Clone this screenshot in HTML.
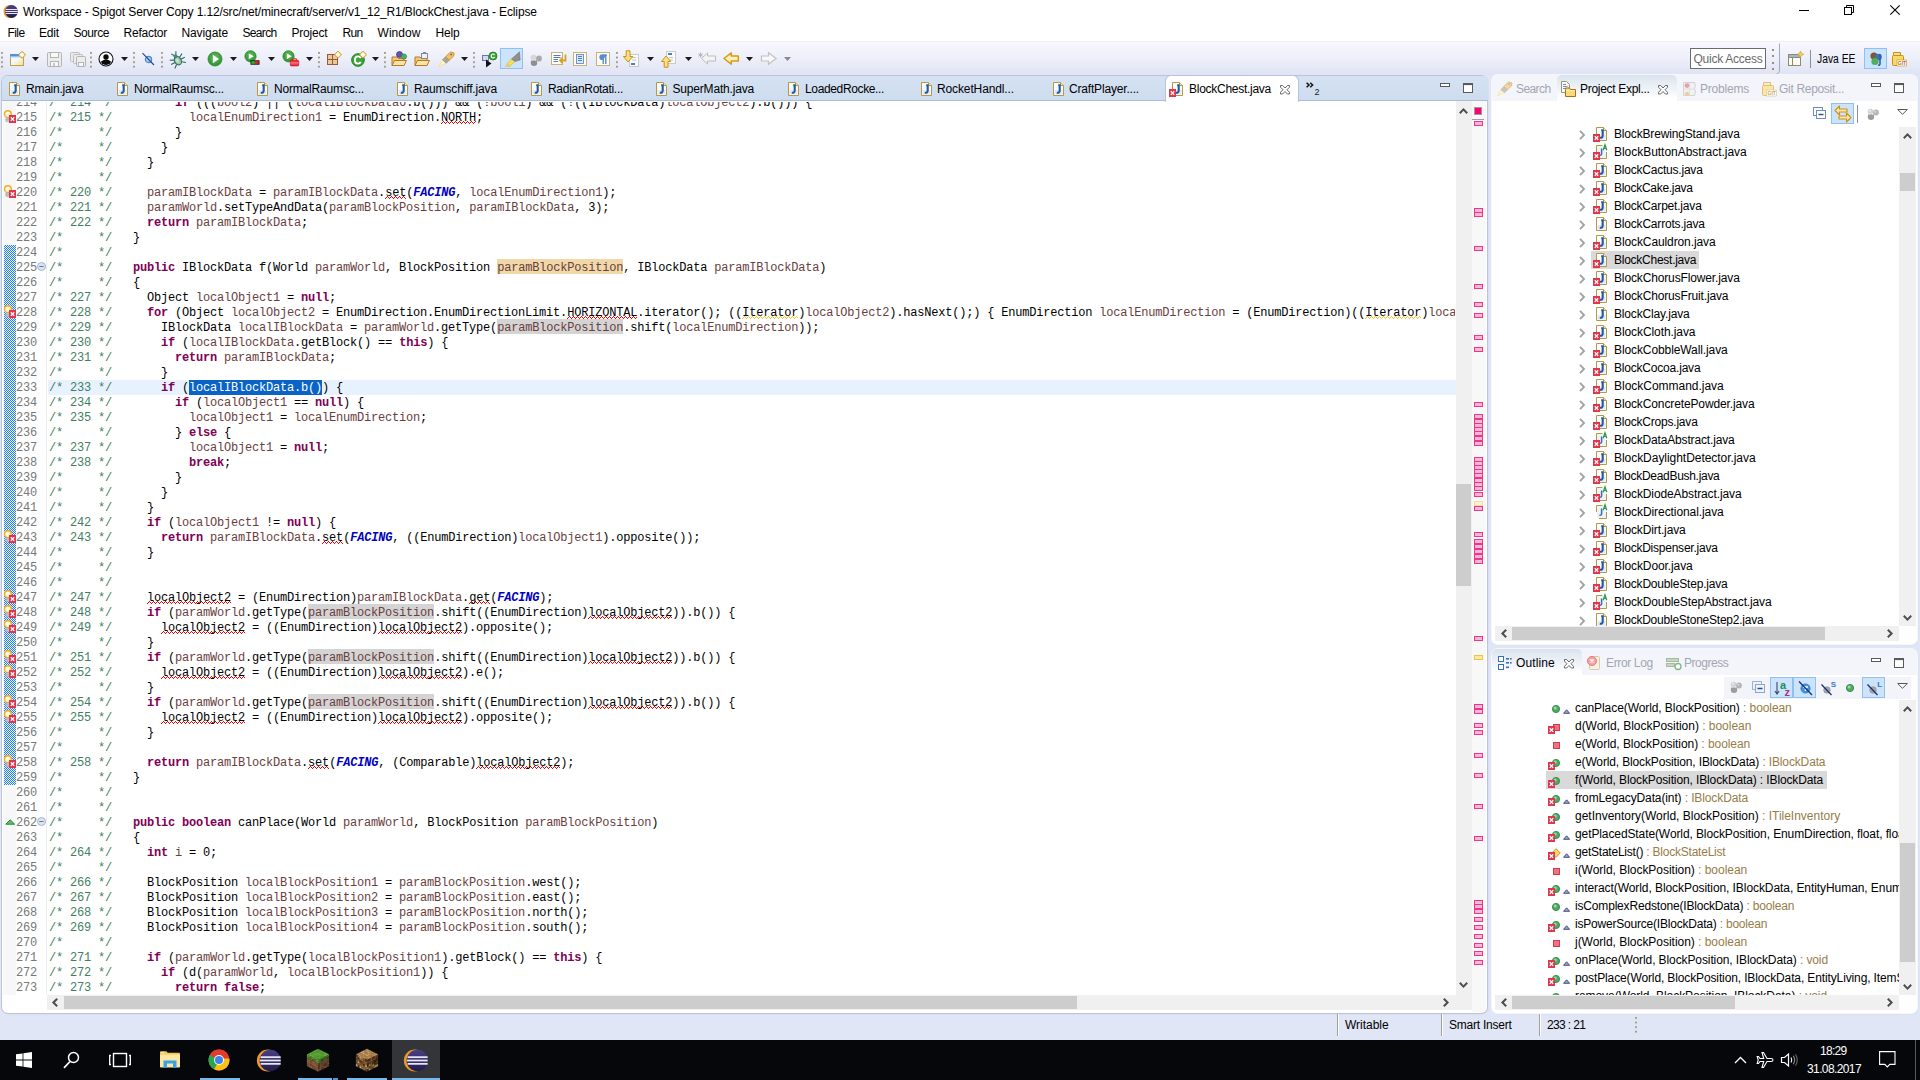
<!DOCTYPE html>
<html><head><meta charset="utf-8"><title>Eclipse</title>
<style>
*{box-sizing:border-box;margin:0;padding:0}
html,body{width:1920px;height:1080px;overflow:hidden}
body{position:relative;background:#e1e6f6;font-family:"Liberation Sans",sans-serif;font-size:12px;letter-spacing:-0.12px;color:#000;-webkit-font-smoothing:antialiased}
.abs{position:absolute}
.t{position:absolute;white-space:pre;line-height:16px;height:16px}
svg{position:absolute;overflow:visible}
/* title + menu */
#title{position:absolute;left:0;top:0;width:1920px;height:22px;background:#fff}
#menu{position:absolute;left:0;top:22px;width:1920px;height:19px;background:#fff}
#toolbar{position:absolute;left:0;top:41px;width:1920px;height:34px;border-top:1px solid #f0f0f0;background:linear-gradient(#f8f8fd 0%,#eef0fa 45%,#dfe3f3 100%)}
/* panels */
.panel{position:absolute;background:#fff;border-radius:6px;box-shadow:0 0 0 1px #bcc4da, 1px 1px 2px rgba(110,120,160,.18)}
.panel.inact{box-shadow:0 0 0 1px #f5f7fd, 1px 1px 2px rgba(130,140,180,.15)}
.tabbar{position:absolute;left:0;top:0;right:0;height:25px;background:linear-gradient(#d5e2f3,#cddcef);border-radius:5px 5px 0 0;border-bottom:1px solid #aebcd6}
.tabsel{position:absolute;top:0;height:26px;background:#fff;border-radius:5px 5px 0 0;box-shadow:0 0 0 1px #b6c3dc;clip-path:inset(-2px -2px 0 -2px)}
.gray{color:#a2a6b2}
/* code */
.code{font-family:"Liberation Mono",monospace;font-size:12px;letter-spacing:-0.2px;white-space:pre;line-height:15px}
.ln{position:absolute;left:0;height:15px;width:1455px}
.k{color:#7f0055;font-weight:bold}
.l{color:#6a3e3e}
.c{color:#3f7f5f}
.s{color:#0000c0;font-style:italic;font-weight:bold}
.n{color:#787878}
.o{padding-top:2px;background:linear-gradient(#d4d4d4,#d4d4d4) 0 0/100% 15px no-repeat}
.O{padding-top:2px;background:linear-gradient(#f0d8a8,#f0d8a8) 0 0/100% 15px no-repeat}
.sel{color:#fff}
.e{background:
 linear-gradient(90deg,transparent 2px,#f00 2px,#f00 3px,transparent 3px) 0 calc(100% - 3px)/4px 1px repeat-x,
 linear-gradient(90deg,transparent 1px,#f00 1px,#f00 2px,transparent 2px,transparent 3px,#f00 3px) 0 calc(100% - 2px)/4px 1px repeat-x,
 linear-gradient(90deg,#f00 1px,transparent 1px) 0 calc(100% - 1px)/4px 1px repeat-x}
.w{background:
 linear-gradient(90deg,transparent 2px,#f4c82d 2px,#f4c82d 3px,transparent 3px) 0 calc(100% - 3px)/4px 1px repeat-x,
 linear-gradient(90deg,transparent 1px,#f4c82d 1px,#f4c82d 2px,transparent 2px,transparent 3px,#f4c82d 3px) 0 calc(100% - 2px)/4px 1px repeat-x,
 linear-gradient(90deg,#f4c82d 1px,transparent 1px) 0 calc(100% - 1px)/4px 1px repeat-x}
/* scrollbars */
.sb{position:absolute;background:#f0f0f0}
.thumb{position:absolute;background:#cdcdcd}
.arr{position:absolute;color:#404040}
/* tree */
.row{position:absolute;height:18px;line-height:18px;white-space:pre}
.ret{color:#957d47}
/* taskbar */
#taskbar{position:absolute;left:0;top:1040px;width:1920px;height:40px;background:#05070b}

</style></head>
<body>
<div class="panel" id="editor" style="left:2px;top:76px;width:1485px;height:937px"></div>
<div class="abs" id="edarea" style="left:2px;top:101px;width:1485px;height:911px;overflow:hidden;background:#fff;border-radius:0 0 5px 5px">
<div class="abs" style="left:1px;top:0;width:13px;height:894px;background:#f7f7f7"></div>
<div class="abs" style="left:2px;top:144px;width:12px;height:540px;background:conic-gradient(#2b7fdc 25%,#e4effb 0 50%,#2b7fdc 0 75%,#e4effb 0) 0 0/2px 2px"></div>
<div class="abs" style="left:44px;top:0;width:1px;height:894px;background:#ededed"></div>
<div class="abs" style="left:46px;top:279px;width:1408px;height:15px;background:#e8f2fe"></div>
<div class="abs" style="left:187px;top:279px;width:133px;height:15px;background:#0a64c8"></div>
<div class="abs" style="left:0;top:0;width:1453px;height:894px;overflow:hidden"><div class="abs code" style="left:0;top:0;width:1453px;height:894px">
<div class="ln" style="top:-5px"><span class="abs n" style="left:14px">214</span><span class="abs" style="left:47px"><span class="c">/* 214 */</span>         <span class="k">if</span> (((<span class="l">bool2</span>) || (<span class="l">localIBlockData6</span>.b())) &amp;&amp; (!<span class="l">bool1</span>) &amp;&amp; (!((IBlockData)<span class="l">localObject2</span>).b())) {</span></div>
<div class="ln" style="top:10px"><span class="abs n" style="left:14px">215</span><span class="abs" style="left:47px"><span class="c">/* 215 */</span>           <span class="l">localEnumDirection1</span> = EnumDirection.<span class="e">NORTH</span>;</span></div>
<div class="ln" style="top:25px"><span class="abs n" style="left:14px">216</span><span class="abs" style="left:47px"><span class="c">/*     */</span>         }</span></div>
<div class="ln" style="top:40px"><span class="abs n" style="left:14px">217</span><span class="abs" style="left:47px"><span class="c">/*     */</span>       }</span></div>
<div class="ln" style="top:55px"><span class="abs n" style="left:14px">218</span><span class="abs" style="left:47px"><span class="c">/*     */</span>     }</span></div>
<div class="ln" style="top:70px"><span class="abs n" style="left:14px">219</span><span class="abs" style="left:47px"><span class="c">/*     */</span> </span></div>
<div class="ln" style="top:85px"><span class="abs n" style="left:14px">220</span><span class="abs" style="left:47px"><span class="c">/* 220 */</span>     <span class="l">paramIBlockData</span> = <span class="l">paramIBlockData</span>.<span class="e">set</span>(<span class="s">FACING</span>, <span class="l">localEnumDirection1</span>);</span></div>
<div class="ln" style="top:100px"><span class="abs n" style="left:14px">221</span><span class="abs" style="left:47px"><span class="c">/* 221 */</span>     <span class="l">paramWorld</span>.setTypeAndData(<span class="l">paramBlockPosition</span>, <span class="l">paramIBlockData</span>, 3);</span></div>
<div class="ln" style="top:115px"><span class="abs n" style="left:14px">222</span><span class="abs" style="left:47px"><span class="c">/* 222 */</span>     <span class="k">return</span> <span class="l">paramIBlockData</span>;</span></div>
<div class="ln" style="top:130px"><span class="abs n" style="left:14px">223</span><span class="abs" style="left:47px"><span class="c">/*     */</span>   }</span></div>
<div class="ln" style="top:145px"><span class="abs n" style="left:14px">224</span><span class="abs" style="left:47px"><span class="c">/*     */</span> </span></div>
<div class="ln" style="top:160px"><span class="abs n" style="left:14px">225</span><span class="abs" style="left:47px"><span class="c">/*     */</span>   <span class="k">public</span> IBlockData f(World <span class="l">paramWorld</span>, BlockPosition <span class="O l">paramBlockPosition</span>, IBlockData <span class="l">paramIBlockData</span>)</span></div>
<div class="ln" style="top:175px"><span class="abs n" style="left:14px">226</span><span class="abs" style="left:47px"><span class="c">/*     */</span>   {</span></div>
<div class="ln" style="top:190px"><span class="abs n" style="left:14px">227</span><span class="abs" style="left:47px"><span class="c">/* 227 */</span>     Object <span class="l">localObject1</span> = <span class="k">null</span>;</span></div>
<div class="ln" style="top:205px"><span class="abs n" style="left:14px">228</span><span class="abs" style="left:47px"><span class="c">/* 228 */</span>     <span class="k">for</span> (Object <span class="l">localObject2</span> = EnumDirection.EnumDirectionLimit.<span class="e">HORIZONTAL</span>.iterator(); ((<span class="w">Iterator</span>)<span class="l">localObject2</span>).hasNext();) { EnumDirection <span class="l">localEnumDirection</span> = (EnumDirection)((<span class="w">Iterator</span>)<span class="l">localObject2</span>).next();</span></div>
<div class="ln" style="top:220px"><span class="abs n" style="left:14px">229</span><span class="abs" style="left:47px"><span class="c">/* 229 */</span>       IBlockData <span class="l">localIBlockData</span> = <span class="l">paramWorld</span>.getType(<span class="o l">paramBlockPosition</span>.shift(<span class="l">localEnumDirection</span>));</span></div>
<div class="ln" style="top:235px"><span class="abs n" style="left:14px">230</span><span class="abs" style="left:47px"><span class="c">/* 230 */</span>       <span class="k">if</span> (<span class="l">localIBlockData</span>.getBlock() == <span class="k">this</span>) {</span></div>
<div class="ln" style="top:250px"><span class="abs n" style="left:14px">231</span><span class="abs" style="left:47px"><span class="c">/* 231 */</span>         <span class="k">return</span> <span class="l">paramIBlockData</span>;</span></div>
<div class="ln" style="top:265px"><span class="abs n" style="left:14px">232</span><span class="abs" style="left:47px"><span class="c">/*     */</span>       }</span></div>
<div class="ln" style="top:280px"><span class="abs n" style="left:14px">233</span><span class="abs" style="left:47px"><span class="c">/* 233 */</span>       <span class="k">if</span> (<span class="sel">localIBlockData.b()</span>) {</span></div>
<div class="ln" style="top:295px"><span class="abs n" style="left:14px">234</span><span class="abs" style="left:47px"><span class="c">/* 234 */</span>         <span class="k">if</span> (<span class="l">localObject1</span> == <span class="k">null</span>) {</span></div>
<div class="ln" style="top:310px"><span class="abs n" style="left:14px">235</span><span class="abs" style="left:47px"><span class="c">/* 235 */</span>           <span class="l">localObject1</span> = <span class="l">localEnumDirection</span>;</span></div>
<div class="ln" style="top:325px"><span class="abs n" style="left:14px">236</span><span class="abs" style="left:47px"><span class="c">/*     */</span>         } <span class="k">else</span> {</span></div>
<div class="ln" style="top:340px"><span class="abs n" style="left:14px">237</span><span class="abs" style="left:47px"><span class="c">/* 237 */</span>           <span class="l">localObject1</span> = <span class="k">null</span>;</span></div>
<div class="ln" style="top:355px"><span class="abs n" style="left:14px">238</span><span class="abs" style="left:47px"><span class="c">/* 238 */</span>           <span class="k">break</span>;</span></div>
<div class="ln" style="top:370px"><span class="abs n" style="left:14px">239</span><span class="abs" style="left:47px"><span class="c">/*     */</span>         }</span></div>
<div class="ln" style="top:385px"><span class="abs n" style="left:14px">240</span><span class="abs" style="left:47px"><span class="c">/*     */</span>       }</span></div>
<div class="ln" style="top:400px"><span class="abs n" style="left:14px">241</span><span class="abs" style="left:47px"><span class="c">/*     */</span>     }</span></div>
<div class="ln" style="top:415px"><span class="abs n" style="left:14px">242</span><span class="abs" style="left:47px"><span class="c">/* 242 */</span>     <span class="k">if</span> (<span class="l">localObject1</span> != <span class="k">null</span>) {</span></div>
<div class="ln" style="top:430px"><span class="abs n" style="left:14px">243</span><span class="abs" style="left:47px"><span class="c">/* 243 */</span>       <span class="k">return</span> <span class="l">paramIBlockData</span>.<span class="e">set</span>(<span class="s">FACING</span>, ((EnumDirection)<span class="l">localObject1</span>).opposite());</span></div>
<div class="ln" style="top:445px"><span class="abs n" style="left:14px">244</span><span class="abs" style="left:47px"><span class="c">/*     */</span>     }</span></div>
<div class="ln" style="top:460px"><span class="abs n" style="left:14px">245</span><span class="abs" style="left:47px"><span class="c">/*     */</span> </span></div>
<div class="ln" style="top:475px"><span class="abs n" style="left:14px">246</span><span class="abs" style="left:47px"><span class="c">/*     */</span> </span></div>
<div class="ln" style="top:490px"><span class="abs n" style="left:14px">247</span><span class="abs" style="left:47px"><span class="c">/* 247 */</span>     <span class="e">localObject2</span> = (EnumDirection)<span class="l">paramIBlockData</span>.<span class="e">get</span>(<span class="s">FACING</span>);</span></div>
<div class="ln" style="top:505px"><span class="abs n" style="left:14px">248</span><span class="abs" style="left:47px"><span class="c">/* 248 */</span>     <span class="k">if</span> (<span class="l">paramWorld</span>.getType(<span class="o l">paramBlockPosition</span>.shift((EnumDirection)<span class="e">localObject2</span>)).b()) {</span></div>
<div class="ln" style="top:520px"><span class="abs n" style="left:14px">249</span><span class="abs" style="left:47px"><span class="c">/* 249 */</span>       <span class="e">localObject2</span> = ((EnumDirection)<span class="e">localObject2</span>).opposite();</span></div>
<div class="ln" style="top:535px"><span class="abs n" style="left:14px">250</span><span class="abs" style="left:47px"><span class="c">/*     */</span>     }</span></div>
<div class="ln" style="top:550px"><span class="abs n" style="left:14px">251</span><span class="abs" style="left:47px"><span class="c">/* 251 */</span>     <span class="k">if</span> (<span class="l">paramWorld</span>.getType(<span class="o l">paramBlockPosition</span>.shift((EnumDirection)<span class="e">localObject2</span>)).b()) {</span></div>
<div class="ln" style="top:565px"><span class="abs n" style="left:14px">252</span><span class="abs" style="left:47px"><span class="c">/* 252 */</span>       <span class="e">localObject2</span> = ((EnumDirection)<span class="e">localObject2</span>).e();</span></div>
<div class="ln" style="top:580px"><span class="abs n" style="left:14px">253</span><span class="abs" style="left:47px"><span class="c">/*     */</span>     }</span></div>
<div class="ln" style="top:595px"><span class="abs n" style="left:14px">254</span><span class="abs" style="left:47px"><span class="c">/* 254 */</span>     <span class="k">if</span> (<span class="l">paramWorld</span>.getType(<span class="o l">paramBlockPosition</span>.shift((EnumDirection)<span class="e">localObject2</span>)).b()) {</span></div>
<div class="ln" style="top:610px"><span class="abs n" style="left:14px">255</span><span class="abs" style="left:47px"><span class="c">/* 255 */</span>       <span class="e">localObject2</span> = ((EnumDirection)<span class="e">localObject2</span>).opposite();</span></div>
<div class="ln" style="top:625px"><span class="abs n" style="left:14px">256</span><span class="abs" style="left:47px"><span class="c">/*     */</span>     }</span></div>
<div class="ln" style="top:640px"><span class="abs n" style="left:14px">257</span><span class="abs" style="left:47px"><span class="c">/*     */</span> </span></div>
<div class="ln" style="top:655px"><span class="abs n" style="left:14px">258</span><span class="abs" style="left:47px"><span class="c">/* 258 */</span>     <span class="k">return</span> <span class="l">paramIBlockData</span>.<span class="e">set</span>(<span class="s">FACING</span>, (Comparable)<span class="e">localObject2</span>);</span></div>
<div class="ln" style="top:670px"><span class="abs n" style="left:14px">259</span><span class="abs" style="left:47px"><span class="c">/*     */</span>   }</span></div>
<div class="ln" style="top:685px"><span class="abs n" style="left:14px">260</span><span class="abs" style="left:47px"><span class="c">/*     */</span> </span></div>
<div class="ln" style="top:700px"><span class="abs n" style="left:14px">261</span><span class="abs" style="left:47px"><span class="c">/*     */</span> </span></div>
<div class="ln" style="top:715px"><span class="abs n" style="left:14px">262</span><span class="abs" style="left:47px"><span class="c">/*     */</span>   <span class="k">public</span> <span class="k">boolean</span> canPlace(World <span class="l">paramWorld</span>, BlockPosition <span class="l">paramBlockPosition</span>)</span></div>
<div class="ln" style="top:730px"><span class="abs n" style="left:14px">263</span><span class="abs" style="left:47px"><span class="c">/*     */</span>   {</span></div>
<div class="ln" style="top:745px"><span class="abs n" style="left:14px">264</span><span class="abs" style="left:47px"><span class="c">/* 264 */</span>     <span class="k">int</span> <span class="l">i</span> = 0;</span></div>
<div class="ln" style="top:760px"><span class="abs n" style="left:14px">265</span><span class="abs" style="left:47px"><span class="c">/*     */</span> </span></div>
<div class="ln" style="top:775px"><span class="abs n" style="left:14px">266</span><span class="abs" style="left:47px"><span class="c">/* 266 */</span>     BlockPosition <span class="l">localBlockPosition1</span> = <span class="l">paramBlockPosition</span>.west();</span></div>
<div class="ln" style="top:790px"><span class="abs n" style="left:14px">267</span><span class="abs" style="left:47px"><span class="c">/* 267 */</span>     BlockPosition <span class="l">localBlockPosition2</span> = <span class="l">paramBlockPosition</span>.east();</span></div>
<div class="ln" style="top:805px"><span class="abs n" style="left:14px">268</span><span class="abs" style="left:47px"><span class="c">/* 268 */</span>     BlockPosition <span class="l">localBlockPosition3</span> = <span class="l">paramBlockPosition</span>.north();</span></div>
<div class="ln" style="top:820px"><span class="abs n" style="left:14px">269</span><span class="abs" style="left:47px"><span class="c">/* 269 */</span>     BlockPosition <span class="l">localBlockPosition4</span> = <span class="l">paramBlockPosition</span>.south();</span></div>
<div class="ln" style="top:835px"><span class="abs n" style="left:14px">270</span><span class="abs" style="left:47px"><span class="c">/*     */</span> </span></div>
<div class="ln" style="top:850px"><span class="abs n" style="left:14px">271</span><span class="abs" style="left:47px"><span class="c">/* 271 */</span>     <span class="k">if</span> (<span class="l">paramWorld</span>.getType(<span class="l">localBlockPosition1</span>).getBlock() == <span class="k">this</span>) {</span></div>
<div class="ln" style="top:865px"><span class="abs n" style="left:14px">272</span><span class="abs" style="left:47px"><span class="c">/* 272 */</span>       <span class="k">if</span> (d(<span class="l">paramWorld</span>, <span class="l">localBlockPosition1</span>)) {</span></div>
<div class="ln" style="top:880px"><span class="abs n" style="left:14px">273</span><span class="abs" style="left:47px"><span class="c">/* 273 */</span>         <span class="k">return</span> <span class="k">false</span>;</span></div>
</div></div>
<div class="abs" style="left:14px;top:0;width:1440px;height:1px;background:#fff"></div>
<svg style="left:2px;top:9px" width="13" height="14" viewBox="0 0 13 14"><circle cx="3.9" cy="4.2" r="3.4" fill="#fdf3c0" stroke="#efae2c" stroke-width="1.4"/><circle cx="3.6" cy="3.6" r="1.3" fill="#fffbe6"/><rect x="1.8" y="8" width="3.6" height="3.6" rx="0.8" fill="#cfd3da" stroke="#9aa1ad" stroke-width="0.6"/><path d="M1.8 9.8H5.4" stroke="#8a919d" stroke-width=".6"/><rect x="5" y="5" width="7" height="8" fill="#e0364c"/><path d="M6.8 7.3L10.2 10.9M10.2 7.3L6.8 10.9" stroke="#fff" stroke-width="1.3" fill="none"/></svg>
<svg style="left:2px;top:84px" width="13" height="14" viewBox="0 0 13 14"><circle cx="3.9" cy="4.2" r="3.4" fill="#fdf3c0" stroke="#efae2c" stroke-width="1.4"/><circle cx="3.6" cy="3.6" r="1.3" fill="#fffbe6"/><rect x="1.8" y="8" width="3.6" height="3.6" rx="0.8" fill="#cfd3da" stroke="#9aa1ad" stroke-width="0.6"/><path d="M1.8 9.8H5.4" stroke="#8a919d" stroke-width=".6"/><rect x="5" y="5" width="7" height="8" fill="#e0364c"/><path d="M6.8 7.3L10.2 10.9M10.2 7.3L6.8 10.9" stroke="#fff" stroke-width="1.3" fill="none"/></svg>
<svg style="left:2px;top:204px" width="13" height="14" viewBox="0 0 13 14"><circle cx="3.9" cy="4.2" r="3.4" fill="#fdf3c0" stroke="#efae2c" stroke-width="1.4"/><circle cx="3.6" cy="3.6" r="1.3" fill="#fffbe6"/><rect x="1.8" y="8" width="3.6" height="3.6" rx="0.8" fill="#cfd3da" stroke="#9aa1ad" stroke-width="0.6"/><path d="M1.8 9.8H5.4" stroke="#8a919d" stroke-width=".6"/><rect x="5" y="5" width="7" height="8" fill="#e0364c"/><path d="M6.8 7.3L10.2 10.9M10.2 7.3L6.8 10.9" stroke="#fff" stroke-width="1.3" fill="none"/></svg>
<svg style="left:2px;top:429px" width="13" height="14" viewBox="0 0 13 14"><circle cx="3.9" cy="4.2" r="3.4" fill="#fdf3c0" stroke="#efae2c" stroke-width="1.4"/><circle cx="3.6" cy="3.6" r="1.3" fill="#fffbe6"/><rect x="1.8" y="8" width="3.6" height="3.6" rx="0.8" fill="#cfd3da" stroke="#9aa1ad" stroke-width="0.6"/><path d="M1.8 9.8H5.4" stroke="#8a919d" stroke-width=".6"/><rect x="5" y="5" width="7" height="8" fill="#e0364c"/><path d="M6.8 7.3L10.2 10.9M10.2 7.3L6.8 10.9" stroke="#fff" stroke-width="1.3" fill="none"/></svg>
<svg style="left:2px;top:489px" width="13" height="14" viewBox="0 0 13 14"><circle cx="3.9" cy="4.2" r="3.4" fill="#fdf3c0" stroke="#efae2c" stroke-width="1.4"/><circle cx="3.6" cy="3.6" r="1.3" fill="#fffbe6"/><rect x="1.8" y="8" width="3.6" height="3.6" rx="0.8" fill="#cfd3da" stroke="#9aa1ad" stroke-width="0.6"/><path d="M1.8 9.8H5.4" stroke="#8a919d" stroke-width=".6"/><rect x="5" y="5" width="7" height="8" fill="#e0364c"/><path d="M6.8 7.3L10.2 10.9M10.2 7.3L6.8 10.9" stroke="#fff" stroke-width="1.3" fill="none"/></svg>
<svg style="left:2px;top:504px" width="13" height="14" viewBox="0 0 13 14"><circle cx="3.9" cy="4.2" r="3.4" fill="#fdf3c0" stroke="#efae2c" stroke-width="1.4"/><circle cx="3.6" cy="3.6" r="1.3" fill="#fffbe6"/><rect x="1.8" y="8" width="3.6" height="3.6" rx="0.8" fill="#cfd3da" stroke="#9aa1ad" stroke-width="0.6"/><path d="M1.8 9.8H5.4" stroke="#8a919d" stroke-width=".6"/><rect x="5" y="5" width="7" height="8" fill="#e0364c"/><path d="M6.8 7.3L10.2 10.9M10.2 7.3L6.8 10.9" stroke="#fff" stroke-width="1.3" fill="none"/></svg>
<svg style="left:2px;top:519px" width="13" height="14" viewBox="0 0 13 14"><circle cx="3.9" cy="4.2" r="3.4" fill="#fdf3c0" stroke="#efae2c" stroke-width="1.4"/><circle cx="3.6" cy="3.6" r="1.3" fill="#fffbe6"/><rect x="1.8" y="8" width="3.6" height="3.6" rx="0.8" fill="#cfd3da" stroke="#9aa1ad" stroke-width="0.6"/><path d="M1.8 9.8H5.4" stroke="#8a919d" stroke-width=".6"/><rect x="5" y="5" width="7" height="8" fill="#e0364c"/><path d="M6.8 7.3L10.2 10.9M10.2 7.3L6.8 10.9" stroke="#fff" stroke-width="1.3" fill="none"/></svg>
<svg style="left:2px;top:549px" width="13" height="14" viewBox="0 0 13 14"><circle cx="3.9" cy="4.2" r="3.4" fill="#fdf3c0" stroke="#efae2c" stroke-width="1.4"/><circle cx="3.6" cy="3.6" r="1.3" fill="#fffbe6"/><rect x="1.8" y="8" width="3.6" height="3.6" rx="0.8" fill="#cfd3da" stroke="#9aa1ad" stroke-width="0.6"/><path d="M1.8 9.8H5.4" stroke="#8a919d" stroke-width=".6"/><rect x="5" y="5" width="7" height="8" fill="#e0364c"/><path d="M6.8 7.3L10.2 10.9M10.2 7.3L6.8 10.9" stroke="#fff" stroke-width="1.3" fill="none"/></svg>
<svg style="left:2px;top:564px" width="13" height="14" viewBox="0 0 13 14"><circle cx="3.9" cy="4.2" r="3.4" fill="#fdf3c0" stroke="#efae2c" stroke-width="1.4"/><circle cx="3.6" cy="3.6" r="1.3" fill="#fffbe6"/><rect x="1.8" y="8" width="3.6" height="3.6" rx="0.8" fill="#cfd3da" stroke="#9aa1ad" stroke-width="0.6"/><path d="M1.8 9.8H5.4" stroke="#8a919d" stroke-width=".6"/><rect x="5" y="5" width="7" height="8" fill="#e0364c"/><path d="M6.8 7.3L10.2 10.9M10.2 7.3L6.8 10.9" stroke="#fff" stroke-width="1.3" fill="none"/></svg>
<svg style="left:2px;top:594px" width="13" height="14" viewBox="0 0 13 14"><circle cx="3.9" cy="4.2" r="3.4" fill="#fdf3c0" stroke="#efae2c" stroke-width="1.4"/><circle cx="3.6" cy="3.6" r="1.3" fill="#fffbe6"/><rect x="1.8" y="8" width="3.6" height="3.6" rx="0.8" fill="#cfd3da" stroke="#9aa1ad" stroke-width="0.6"/><path d="M1.8 9.8H5.4" stroke="#8a919d" stroke-width=".6"/><rect x="5" y="5" width="7" height="8" fill="#e0364c"/><path d="M6.8 7.3L10.2 10.9M10.2 7.3L6.8 10.9" stroke="#fff" stroke-width="1.3" fill="none"/></svg>
<svg style="left:2px;top:609px" width="13" height="14" viewBox="0 0 13 14"><circle cx="3.9" cy="4.2" r="3.4" fill="#fdf3c0" stroke="#efae2c" stroke-width="1.4"/><circle cx="3.6" cy="3.6" r="1.3" fill="#fffbe6"/><rect x="1.8" y="8" width="3.6" height="3.6" rx="0.8" fill="#cfd3da" stroke="#9aa1ad" stroke-width="0.6"/><path d="M1.8 9.8H5.4" stroke="#8a919d" stroke-width=".6"/><rect x="5" y="5" width="7" height="8" fill="#e0364c"/><path d="M6.8 7.3L10.2 10.9M10.2 7.3L6.8 10.9" stroke="#fff" stroke-width="1.3" fill="none"/></svg>
<svg style="left:2px;top:654px" width="13" height="14" viewBox="0 0 13 14"><circle cx="3.9" cy="4.2" r="3.4" fill="#fdf3c0" stroke="#efae2c" stroke-width="1.4"/><circle cx="3.6" cy="3.6" r="1.3" fill="#fffbe6"/><rect x="1.8" y="8" width="3.6" height="3.6" rx="0.8" fill="#cfd3da" stroke="#9aa1ad" stroke-width="0.6"/><path d="M1.8 9.8H5.4" stroke="#8a919d" stroke-width=".6"/><rect x="5" y="5" width="7" height="8" fill="#e0364c"/><path d="M6.8 7.3L10.2 10.9M10.2 7.3L6.8 10.9" stroke="#fff" stroke-width="1.3" fill="none"/></svg>
<svg style="left:35px;top:161px" width="9" height="9" viewBox="0 0 9 9"><circle cx="4.5" cy="4.5" r="4" fill="#dce5ef" stroke="#a3b6cf" stroke-width="1"/><path d="M2.3 4.5H6.7" stroke="#5f7da6" stroke-width="1.1"/></svg>
<svg style="left:35px;top:716px" width="9" height="9" viewBox="0 0 9 9"><circle cx="4.5" cy="4.5" r="4" fill="#dce5ef" stroke="#a3b6cf" stroke-width="1"/><path d="M2.3 4.5H6.7" stroke="#5f7da6" stroke-width="1.1"/></svg>
<svg style="left:3px;top:718px" width="11" height="6" viewBox="0 0 11 6"><path d="M0.8 5.2L5.2 0.8L9.6 5.2Z" fill="#5fbf68" stroke="#1f8a34" stroke-width="1"/></svg>
<div class="sb" style="left:1454px;top:0;width:16px;height:894px"></div>
<div class="thumb" style="left:1454px;top:383px;width:15px;height:102px"></div>
<svg style="left:1457px;top:7px" width="9" height="6" viewBox="0 0 9 6"><path d="M0.8 5.2L4.5 1.4L8.2 5.2" fill="none" stroke="#4d4d4d" stroke-width="2"/></svg>
<svg style="left:1457px;top:881px" width="9" height="6" viewBox="0 0 9 6"><path d="M0.8 0.8L4.5 4.6L8.2 0.8" fill="none" stroke="#4d4d4d" stroke-width="2"/></svg>
<div class="abs" style="left:1470px;top:0;width:14px;height:911px;background:#f8f8f8"></div>
<div class="abs" style="left:1472px;top:6px;width:8px;height:8px;background:#ff0078;border:1px solid #a09a9c"></div>
<div class="abs" style="left:1470px;top:18px;width:12px;height:1px;background:#9aa0b0"></div>
<div class="abs" style="left:1472px;top:20px;width:9px;height:5px;background:#f9b9d6;border:1px solid #f0358c"></div>
<div class="abs" style="left:1472px;top:107px;width:9px;height:5px;background:#f9b9d6;border:1px solid #f0358c"></div>
<div class="abs" style="left:1472px;top:111px;width:9px;height:5px;background:#f9b9d6;border:1px solid #f0358c"></div>
<div class="abs" style="left:1472px;top:145px;width:9px;height:5px;background:#f9b9d6;border:1px solid #f0358c"></div>
<div class="abs" style="left:1472px;top:183px;width:9px;height:5px;background:#f9b9d6;border:1px solid #f0358c"></div>
<div class="abs" style="left:1472px;top:201px;width:9px;height:5px;background:#f9b9d6;border:1px solid #f0358c"></div>
<div class="abs" style="left:1472px;top:212px;width:9px;height:5px;background:#f9b9d6;border:1px solid #f0358c"></div>
<div class="abs" style="left:1472px;top:234px;width:9px;height:5px;background:#f9b9d6;border:1px solid #f0358c"></div>
<div class="abs" style="left:1472px;top:246px;width:9px;height:5px;background:#f9b9d6;border:1px solid #f0358c"></div>
<div class="abs" style="left:1472px;top:301px;width:9px;height:5px;background:#f9b9d6;border:1px solid #f0358c"></div>
<div class="abs" style="left:1472px;top:313px;width:9px;height:5px;background:#f9b9d6;border:1px solid #f0358c"></div>
<div class="abs" style="left:1472px;top:318px;width:9px;height:5px;background:#f9b9d6;border:1px solid #f0358c"></div>
<div class="abs" style="left:1472px;top:322px;width:9px;height:5px;background:#f9b9d6;border:1px solid #f0358c"></div>
<div class="abs" style="left:1472px;top:326px;width:9px;height:5px;background:#f9b9d6;border:1px solid #f0358c"></div>
<div class="abs" style="left:1472px;top:330px;width:9px;height:5px;background:#f9b9d6;border:1px solid #f0358c"></div>
<div class="abs" style="left:1472px;top:335px;width:9px;height:5px;background:#f9b9d6;border:1px solid #f0358c"></div>
<div class="abs" style="left:1472px;top:340px;width:9px;height:5px;background:#f9b9d6;border:1px solid #f0358c"></div>
<div class="abs" style="left:1472px;top:356px;width:9px;height:5px;background:#f9b9d6;border:1px solid #f0358c"></div>
<div class="abs" style="left:1472px;top:360px;width:9px;height:5px;background:#f9b9d6;border:1px solid #f0358c"></div>
<div class="abs" style="left:1472px;top:364px;width:9px;height:5px;background:#f9b9d6;border:1px solid #f0358c"></div>
<div class="abs" style="left:1472px;top:368px;width:9px;height:5px;background:#f9b9d6;border:1px solid #f0358c"></div>
<div class="abs" style="left:1472px;top:372px;width:9px;height:5px;background:#f9b9d6;border:1px solid #f0358c"></div>
<div class="abs" style="left:1472px;top:377px;width:9px;height:5px;background:#f9b9d6;border:1px solid #f0358c"></div>
<div class="abs" style="left:1472px;top:381px;width:9px;height:5px;background:#f9b9d6;border:1px solid #f0358c"></div>
<div class="abs" style="left:1472px;top:385px;width:9px;height:5px;background:#f9b9d6;border:1px solid #f0358c"></div>
<div class="abs" style="left:1472px;top:391px;width:9px;height:5px;background:#f9b9d6;border:1px solid #f0358c"></div>
<div class="abs" style="left:1472px;top:405px;width:9px;height:5px;background:#f9b9d6;border:1px solid #f0358c"></div>
<div class="abs" style="left:1472px;top:431px;width:9px;height:5px;background:#f9b9d6;border:1px solid #f0358c"></div>
<div class="abs" style="left:1472px;top:438px;width:9px;height:5px;background:#f9b9d6;border:1px solid #f0358c"></div>
<div class="abs" style="left:1472px;top:443px;width:9px;height:5px;background:#f9b9d6;border:1px solid #f0358c"></div>
<div class="abs" style="left:1472px;top:448px;width:9px;height:5px;background:#f9b9d6;border:1px solid #f0358c"></div>
<div class="abs" style="left:1472px;top:453px;width:9px;height:5px;background:#f9b9d6;border:1px solid #f0358c"></div>
<div class="abs" style="left:1472px;top:458px;width:9px;height:5px;background:#f9b9d6;border:1px solid #f0358c"></div>
<div class="abs" style="left:1472px;top:535px;width:9px;height:5px;background:#f9b9d6;border:1px solid #f0358c"></div>
<div class="abs" style="left:1472px;top:603px;width:9px;height:5px;background:#f9b9d6;border:1px solid #f0358c"></div>
<div class="abs" style="left:1472px;top:608px;width:9px;height:5px;background:#f9b9d6;border:1px solid #f0358c"></div>
<div class="abs" style="left:1472px;top:622px;width:9px;height:5px;background:#f9b9d6;border:1px solid #f0358c"></div>
<div class="abs" style="left:1472px;top:629px;width:9px;height:5px;background:#f9b9d6;border:1px solid #f0358c"></div>
<div class="abs" style="left:1472px;top:652px;width:9px;height:5px;background:#f9b9d6;border:1px solid #f0358c"></div>
<div class="abs" style="left:1472px;top:672px;width:9px;height:5px;background:#f9b9d6;border:1px solid #f0358c"></div>
<div class="abs" style="left:1472px;top:703px;width:9px;height:5px;background:#f9b9d6;border:1px solid #f0358c"></div>
<div class="abs" style="left:1472px;top:735px;width:9px;height:5px;background:#f9b9d6;border:1px solid #f0358c"></div>
<div class="abs" style="left:1472px;top:799px;width:9px;height:5px;background:#f9b9d6;border:1px solid #f0358c"></div>
<div class="abs" style="left:1472px;top:803px;width:9px;height:5px;background:#f9b9d6;border:1px solid #f0358c"></div>
<div class="abs" style="left:1472px;top:808px;width:9px;height:5px;background:#f9b9d6;border:1px solid #f0358c"></div>
<div class="abs" style="left:1472px;top:816px;width:9px;height:5px;background:#f9b9d6;border:1px solid #f0358c"></div>
<div class="abs" style="left:1472px;top:824px;width:9px;height:5px;background:#f9b9d6;border:1px solid #f0358c"></div>
<div class="abs" style="left:1472px;top:833px;width:9px;height:5px;background:#f9b9d6;border:1px solid #f0358c"></div>
<div class="abs" style="left:1472px;top:842px;width:9px;height:5px;background:#f9b9d6;border:1px solid #f0358c"></div>
<div class="abs" style="left:1472px;top:850px;width:9px;height:5px;background:#f9b9d6;border:1px solid #f0358c"></div>
<div class="abs" style="left:1472px;top:859px;width:9px;height:5px;background:#f9b9d6;border:1px solid #f0358c"></div>
<div class="abs" style="left:1472px;top:400px;width:9px;height:5px;background:#fbe9a6;border:1px solid #f0c43c;opacity:0.45"></div>
<div class="abs" style="left:1472px;top:554px;width:9px;height:5px;background:#fbe9a6;border:1px solid #f0c43c;opacity:1"></div>
<div class="sb" style="left:45px;top:894px;width:1408px;height:15px"></div>
<div class="thumb" style="left:62px;top:895px;width:1013px;height:13px"></div>
<svg style="left:50px;top:897px" width="6" height="9" viewBox="0 0 6 9"><path d="M5.2 0.8L1.4 4.5L5.2 8.2" fill="none" stroke="#4d4d4d" stroke-width="2"/></svg>
<svg style="left:1441px;top:897px" width="6" height="9" viewBox="0 0 6 9"><path d="M0.8 0.8L4.6 4.5L0.8 8.2" fill="none" stroke="#4d4d4d" stroke-width="2"/></svg>
<div class="abs" style="left:1453px;top:894px;width:17px;height:15px;background:#f0f0f0"></div>
</div>
<div id="title"></div><div id="menu"></div><div id="toolbar"></div>
<svg style="left:3px;top:4px" width="15" height="15" viewBox="0 0 14.2 14"><defs><linearGradient id="eg" x1="0" y1="0" x2="0" y2="1"><stop offset="0" stop-color="#4a3f86"/><stop offset="1" stop-color="#231c4d"/></linearGradient></defs><circle cx="6.7" cy="7" r="6.2" fill="#f19a22"/><circle cx="8.1" cy="7" r="6.1" fill="url(#eg)"/><rect x="2.6" y="4.6" width="11.4" height="1" fill="#e8e6f4"/><rect x="2.2" y="6.5" width="11.8" height="1" fill="#e8e6f4"/><rect x="2.6" y="8.4" width="11.4" height="1" fill="#e8e6f4"/></svg>
<span class="t " style="left:23px;top:4px;letter-spacing:-0.135px">Workspace - Spigot Server Copy 1.12/src/net/minecraft/server/v1_12_R1/BlockChest.java - Eclipse</span>
<div class="abs" style="left:1799px;top:10px;width:10px;height:1px;background:#000"></div>
<svg style="left:1844px;top:5px" width="10" height="10" viewBox="0 0 10 10"><rect x="0.5" y="2.5" width="7" height="7" fill="none" stroke="#000"/><path d="M2.5 2.5V0.5H9.5V7.5H7.5" fill="none" stroke="#000"/></svg>
<svg style="left:1890px;top:5px" width="10" height="10" viewBox="0 0 10 10"><path d="M0.3 0.3L9.7 9.7M9.7 0.3L0.3 9.7" stroke="#000" stroke-width="1.1"/></svg>
<span class="t " style="left:7.5px;top:25px;letter-spacing:-0.584px;">File</span>
<span class="t " style="left:39px;top:25px;letter-spacing:-0.169px;">Edit</span>
<span class="t " style="left:73.5px;top:25px;letter-spacing:-0.42px;">Source</span>
<span class="t " style="left:123.5px;top:25px;letter-spacing:-0.231px;">Refactor</span>
<span class="t " style="left:181.5px;top:25px;letter-spacing:-0.108px;">Navigate</span>
<span class="t " style="left:242.5px;top:25px;letter-spacing:-0.67px;">Search</span>
<span class="t " style="left:291.5px;top:25px;letter-spacing:-0.193px;">Project</span>
<span class="t " style="left:342.5px;top:25px;letter-spacing:-0.671px;">Run</span>
<span class="t " style="left:377.5px;top:25px;letter-spacing:0.053px;">Window</span>
<span class="t " style="left:435.5px;top:25px;letter-spacing:-0.17px;">Help</span>
<svg style="left:1px;top:52px" width="3" height="16" viewBox="0 0 3 16"><rect x="0" y="0" width="2" height="2" fill="#a29c8c"/><rect x="0.5" y="1.5" width="2" height="1" fill="#e9e6dc" opacity=".6"/><rect x="0" y="4.6" width="2" height="2" fill="#a29c8c"/><rect x="0.5" y="6.1" width="2" height="1" fill="#e9e6dc" opacity=".6"/><rect x="0" y="9.2" width="2" height="2" fill="#a29c8c"/><rect x="0.5" y="10.7" width="2" height="1" fill="#e9e6dc" opacity=".6"/><rect x="0" y="13.8" width="2" height="2" fill="#a29c8c"/><rect x="0.5" y="15.3" width="2" height="1" fill="#e9e6dc" opacity=".6"/></svg>
<svg style="left:90px;top:52px" width="3" height="16" viewBox="0 0 3 16"><rect x="0" y="0" width="2" height="2" fill="#a29c8c"/><rect x="0.5" y="1.5" width="2" height="1" fill="#e9e6dc" opacity=".6"/><rect x="0" y="4.6" width="2" height="2" fill="#a29c8c"/><rect x="0.5" y="6.1" width="2" height="1" fill="#e9e6dc" opacity=".6"/><rect x="0" y="9.2" width="2" height="2" fill="#a29c8c"/><rect x="0.5" y="10.7" width="2" height="1" fill="#e9e6dc" opacity=".6"/><rect x="0" y="13.8" width="2" height="2" fill="#a29c8c"/><rect x="0.5" y="15.3" width="2" height="1" fill="#e9e6dc" opacity=".6"/></svg>
<svg style="left:133px;top:52px" width="3" height="16" viewBox="0 0 3 16"><rect x="0" y="0" width="2" height="2" fill="#a29c8c"/><rect x="0.5" y="1.5" width="2" height="1" fill="#e9e6dc" opacity=".6"/><rect x="0" y="4.6" width="2" height="2" fill="#a29c8c"/><rect x="0.5" y="6.1" width="2" height="1" fill="#e9e6dc" opacity=".6"/><rect x="0" y="9.2" width="2" height="2" fill="#a29c8c"/><rect x="0.5" y="10.7" width="2" height="1" fill="#e9e6dc" opacity=".6"/><rect x="0" y="13.8" width="2" height="2" fill="#a29c8c"/><rect x="0.5" y="15.3" width="2" height="1" fill="#e9e6dc" opacity=".6"/></svg>
<svg style="left:161px;top:52px" width="3" height="16" viewBox="0 0 3 16"><rect x="0" y="0" width="2" height="2" fill="#a29c8c"/><rect x="0.5" y="1.5" width="2" height="1" fill="#e9e6dc" opacity=".6"/><rect x="0" y="4.6" width="2" height="2" fill="#a29c8c"/><rect x="0.5" y="6.1" width="2" height="1" fill="#e9e6dc" opacity=".6"/><rect x="0" y="9.2" width="2" height="2" fill="#a29c8c"/><rect x="0.5" y="10.7" width="2" height="1" fill="#e9e6dc" opacity=".6"/><rect x="0" y="13.8" width="2" height="2" fill="#a29c8c"/><rect x="0.5" y="15.3" width="2" height="1" fill="#e9e6dc" opacity=".6"/></svg>
<svg style="left:318px;top:52px" width="3" height="16" viewBox="0 0 3 16"><rect x="0" y="0" width="2" height="2" fill="#a29c8c"/><rect x="0.5" y="1.5" width="2" height="1" fill="#e9e6dc" opacity=".6"/><rect x="0" y="4.6" width="2" height="2" fill="#a29c8c"/><rect x="0.5" y="6.1" width="2" height="1" fill="#e9e6dc" opacity=".6"/><rect x="0" y="9.2" width="2" height="2" fill="#a29c8c"/><rect x="0.5" y="10.7" width="2" height="1" fill="#e9e6dc" opacity=".6"/><rect x="0" y="13.8" width="2" height="2" fill="#a29c8c"/><rect x="0.5" y="15.3" width="2" height="1" fill="#e9e6dc" opacity=".6"/></svg>
<svg style="left:384px;top:52px" width="3" height="16" viewBox="0 0 3 16"><rect x="0" y="0" width="2" height="2" fill="#a29c8c"/><rect x="0.5" y="1.5" width="2" height="1" fill="#e9e6dc" opacity=".6"/><rect x="0" y="4.6" width="2" height="2" fill="#a29c8c"/><rect x="0.5" y="6.1" width="2" height="1" fill="#e9e6dc" opacity=".6"/><rect x="0" y="9.2" width="2" height="2" fill="#a29c8c"/><rect x="0.5" y="10.7" width="2" height="1" fill="#e9e6dc" opacity=".6"/><rect x="0" y="13.8" width="2" height="2" fill="#a29c8c"/><rect x="0.5" y="15.3" width="2" height="1" fill="#e9e6dc" opacity=".6"/></svg>
<svg style="left:473px;top:52px" width="3" height="16" viewBox="0 0 3 16"><rect x="0" y="0" width="2" height="2" fill="#a29c8c"/><rect x="0.5" y="1.5" width="2" height="1" fill="#e9e6dc" opacity=".6"/><rect x="0" y="4.6" width="2" height="2" fill="#a29c8c"/><rect x="0.5" y="6.1" width="2" height="1" fill="#e9e6dc" opacity=".6"/><rect x="0" y="9.2" width="2" height="2" fill="#a29c8c"/><rect x="0.5" y="10.7" width="2" height="1" fill="#e9e6dc" opacity=".6"/><rect x="0" y="13.8" width="2" height="2" fill="#a29c8c"/><rect x="0.5" y="15.3" width="2" height="1" fill="#e9e6dc" opacity=".6"/></svg>
<svg style="left:616px;top:52px" width="3" height="16" viewBox="0 0 3 16"><rect x="0" y="0" width="2" height="2" fill="#a29c8c"/><rect x="0.5" y="1.5" width="2" height="1" fill="#e9e6dc" opacity=".6"/><rect x="0" y="4.6" width="2" height="2" fill="#a29c8c"/><rect x="0.5" y="6.1" width="2" height="1" fill="#e9e6dc" opacity=".6"/><rect x="0" y="9.2" width="2" height="2" fill="#a29c8c"/><rect x="0.5" y="10.7" width="2" height="1" fill="#e9e6dc" opacity=".6"/><rect x="0" y="13.8" width="2" height="2" fill="#a29c8c"/><rect x="0.5" y="15.3" width="2" height="1" fill="#e9e6dc" opacity=".6"/></svg>
<svg style="left:1772px;top:49px" width="2" height="22" viewBox="0 0 2 22"><rect x="0" y="0" width="2" height="2" fill="#9a9080"/><rect x="0" y="6" width="2" height="2" fill="#9a9080"/><rect x="0" y="13" width="2" height="2" fill="#9a9080"/><rect x="0" y="19" width="2" height="2" fill="#9a9080"/></svg>
<svg style="left:1774px;top:43px" width="8" height="32" viewBox="0 0 8 32"><path d="M5.5 0.5V27Q5.5 31 1 31.5" fill="none" stroke="#a3a9bf" stroke-width="1"/></svg>
<svg style="left:10px;top:51px" width="16" height="16" viewBox="0 0 16 16"><defs><linearGradient id="nw" x1="0" y1="0" x2="1" y2="1"><stop offset=".45" stop-color="#f4f9ff"/><stop offset="1" stop-color="#f6df8a"/></linearGradient></defs><rect x="0.5" y="3.5" width="13" height="11" fill="url(#nw)" stroke="#c2a04a"/><rect x="0" y="3" width="14" height="2.6" fill="#4e93dc"/><rect x="0" y="5.6" width="14" height="0.8" fill="#a8cdf2"/><rect x="9.4" y="1.1999999999999997" width="5.2" height="5.2" rx="1.2" transform="rotate(45 12 3.8)" fill="#f6e2a0" stroke="#c49a32" stroke-width="0.9"/><path d="M10 3.8H14M12 1.7999999999999998V5.8" stroke="#fff" stroke-width="1.2"/></svg>
<svg style="left:32px;top:57px" width="7" height="4" viewBox="0 0 7 4"><path d="M0 0H7L3.5 4Z" fill="#1a1a1a"/></svg>
<svg style="left:47px;top:52px" width="15" height="15" viewBox="0 0 15 15"><rect x="0.5" y="0.5" width="14" height="14" rx="1" fill="#ececec" stroke="#b4b4b4"/><rect x="3.5" y="0.5" width="8" height="5" fill="#f8f8f8" stroke="#b4b4b4"/><rect x="3.5" y="9.5" width="8" height="5" fill="#f8f8f8" stroke="#b4b4b4"/><rect x="6" y="11" width="2" height="3" fill="#c8c8c8"/></svg>
<svg style="left:70px;top:52px" width="16" height="15" viewBox="0 0 16 15"><rect x="0.5" y="0.5" width="9" height="9" rx="1" fill="#ececec" stroke="#bdbdbd"/><rect x="3.5" y="2.5" width="9" height="9" rx="1" fill="#ececec" stroke="#bdbdbd"/><rect x="6.5" y="4.5" width="9" height="10" rx="1" fill="#ececec" stroke="#b4b4b4"/><rect x="8.5" y="10.5" width="5" height="4" fill="#f8f8f8" stroke="#b4b4b4"/></svg>
<svg style="left:98px;top:51px" width="16" height="16" viewBox="0 0 16 16"><defs><clipPath id="uc"><circle cx="8" cy="8" r="5.9"/></clipPath></defs><circle cx="8" cy="8" r="7" fill="#fff" stroke="#111" stroke-width="1.1"/><g clip-path="url(#uc)"><circle cx="8" cy="6" r="2.7" fill="#0a0a0a"/><ellipse cx="8" cy="14.2" rx="6.2" ry="5.6" fill="#0a0a0a"/></g></svg>
<svg style="left:121px;top:57px" width="7" height="4" viewBox="0 0 7 4"><path d="M0 0H7L3.5 4Z" fill="#1a1a1a"/></svg>
<svg style="left:141px;top:52px" width="14" height="14" viewBox="0 0 14 14"><circle cx="7.5" cy="7.5" r="3.1" fill="#a9cfee" stroke="#4a86c8" stroke-width="1.2"/><path d="M1.5 1.2L13 13" stroke="#2a3f8f" stroke-width="1.1"/></svg>
<svg style="left:169px;top:51px" width="17" height="17" viewBox="0 0 17 17"><g transform="rotate(-28 8.5 9)"><path d="M5.4 7.5L1.5 5.5M5.2 10H0.8M5.6 12.5L2.2 15.2M11.6 7.5L15.5 5.5M11.8 10H16.2M11.4 12.5L14.8 15.2M7.4 3.4L5.8 0.6M9.6 3.4L11.2 0.6" stroke="#2c6a68" stroke-width="1.1" fill="none"/><ellipse cx="8.5" cy="9.8" rx="3.3" ry="4.4" fill="#a3cba3" stroke="#2c6a68" stroke-width="1.1"/><circle cx="8.5" cy="4.8" r="1.7" fill="#4f8f80" stroke="#2c6a68" stroke-width=".6"/><ellipse cx="8" cy="9.4" rx="1.4" ry="2.4" fill="#d2e8cf" opacity=".8"/></g></svg>
<svg style="left:192px;top:57px" width="7" height="4" viewBox="0 0 7 4"><path d="M0 0H7L3.5 4Z" fill="#1a1a1a"/></svg>
<svg style="left:207px;top:51px" width="16" height="16" viewBox="0 0 16 16"><defs><radialGradient id="rg" cx=".5" cy=".4" r=".6"><stop offset="0" stop-color="#62c25e"/><stop offset="1" stop-color="#2f8f2e"/></radialGradient></defs><circle cx="8" cy="8" r="7" fill="url(#rg)" stroke="#2b8a2b" stroke-width="0.8"/><path d="M5.8 3.8L12 8L5.8 12.2Z" fill="#fff"/></svg>
<svg style="left:230px;top:57px" width="7" height="4" viewBox="0 0 7 4"><path d="M0 0H7L3.5 4Z" fill="#1a1a1a"/></svg>
<svg style="left:244px;top:50px" width="18" height="17" viewBox="0 0 18 17"><circle cx="6.5" cy="6.3" r="5.6" fill="url(#rg)" stroke="#2b8a2b" stroke-width="0.8"/><path d="M4.8 3.4L9.8 6.3L4.8 9.2Z" fill="#fff"/><rect x="6.5" y="10.3" width="9" height="4.4" fill="#111"/><rect x="7.3" y="11.1" width="3.6" height="2.8" fill="#1fb43a"/><rect x="10.9" y="11.1" width="3.8" height="2.8" fill="#e8202a"/></svg>
<svg style="left:268px;top:57px" width="7" height="4" viewBox="0 0 7 4"><path d="M0 0H7L3.5 4Z" fill="#1a1a1a"/></svg>
<svg style="left:282px;top:50px" width="18" height="17" viewBox="0 0 18 17"><circle cx="6.5" cy="6.3" r="5.6" fill="url(#rg)" stroke="#2b8a2b" stroke-width="0.8"/><path d="M4.8 3.4L9.8 6.3L4.8 9.2Z" fill="#fff"/><rect x="8.3" y="10.3" width="8.4" height="5.6" rx="1" fill="#ea2f38" stroke="#c4141e" stroke-width=".7"/><path d="M10.6 10.2V8.8H14.4V10.2" stroke="#d8202a" stroke-width="1" fill="none"/><path d="M8.6 12.4H16.4M8.6 13.8H16.4" stroke="#f7a0a4" stroke-width=".6" fill="none"/></svg>
<svg style="left:306px;top:57px" width="7" height="4" viewBox="0 0 7 4"><path d="M0 0H7L3.5 4Z" fill="#1a1a1a"/></svg>
<svg style="left:326px;top:51px" width="16" height="16" viewBox="0 0 16 16"><rect x="1.5" y="3.5" width="10" height="10" fill="#e9c9a0" stroke="#9a5a32"/><path d="M1.5 8.5H11.5M6.5 3.5V13.5" stroke="#9a5a32"/><rect x="9.4" y="1.0" width="5.2" height="5.2" rx="1.2" transform="rotate(45 12 3.6)" fill="#f6e2a0" stroke="#c49a32" stroke-width="0.9"/><path d="M10 3.6H14M12 1.6V5.6" stroke="#fff" stroke-width="1.2"/></svg>
<svg style="left:351px;top:51px" width="17" height="16" viewBox="0 0 17 16"><circle cx="7" cy="9" r="6.3" fill="#3ea53a" stroke="#1f7a23"/><path d="M9.8 7Q8.8 5.4 7 5.4Q3.9 5.4 3.9 9Q3.9 12.6 7 12.6Q8.8 12.6 9.8 11" fill="none" stroke="#fff" stroke-width="1.9"/><rect x="9.4" y="1.0" width="5.2" height="5.2" rx="1.2" transform="rotate(45 12 3.6)" fill="#f6e2a0" stroke="#c49a32" stroke-width="0.9"/><path d="M10 3.6H14M12 1.6V5.6" stroke="#fff" stroke-width="1.2"/></svg>
<svg style="left:372px;top:57px" width="7" height="4" viewBox="0 0 7 4"><path d="M0 0H7L3.5 4Z" fill="#1a1a1a"/></svg>
<svg style="left:391px;top:51px" width="17" height="16" viewBox="0 0 17 16"><path d="M1 6H6L7.5 7.5H13V14.5H1Z" fill="#f2c97a" stroke="#b27b26"/><path d="M1 14.5L3.5 9.5H15.5L13 14.5Z" fill="#fbe2a7" stroke="#b27b26"/><circle cx="8.5" cy="3.5" r="3" fill="#6a52a8" stroke="#3f2f7a" stroke-width=".7"/><circle cx="13" cy="5.5" r="2.6" fill="#4fae61" stroke="#2f8a45" stroke-width=".7"/></svg>
<svg style="left:414px;top:51px" width="17" height="16" viewBox="0 0 17 16"><path d="M1 6H6L7.5 7.5H13V14.5H1Z" fill="#f2c97a" stroke="#b27b26"/><path d="M1 14.5L3.5 9.5H15.5L13 14.5Z" fill="#fbe2a7" stroke="#b27b26"/><rect x="7.5" y="2.5" width="6" height="5" fill="#eef1f8" stroke="#8089a8"/><rect x="9" y="1" width="3" height="2" fill="#8089a8"/></svg>
<svg style="left:438px;top:51px" width="18" height="17" viewBox="0 0 18 17"><path d="M0.8 15.5L4.5 8.8L8.3 12.2Z" fill="#fdf6c8" stroke="#f0d868" stroke-width=".6"/><path d="M4.5 8.8L7.5 5.8L11.2 9.2L8.3 12.2Z" fill="#a8a6a4" stroke="#8a8884" stroke-width=".6"/><path d="M7.5 5.8L12.6 0.9L16.2 2L15.6 5.2L11.2 9.2Z" fill="#f5c062" stroke="#c8861e" stroke-width=".8"/><circle cx="13.2" cy="3.4" r="0.9" fill="#3f6fc0"/></svg>
<svg style="left:461px;top:57px" width="7" height="4" viewBox="0 0 7 4"><path d="M0 0H7L3.5 4Z" fill="#1a1a1a"/></svg>
<svg style="left:481px;top:51px" width="18" height="17" viewBox="0 0 18 17"><rect x="1.5" y="4.5" width="6" height="5" fill="#d6daf0" stroke="#6f76a8"/><path d="M5 8.5V16.5L10.5 12.5Z" fill="#111"/><circle cx="12" cy="5" r="4" fill="#3ea53a" stroke="#1f7a23" stroke-width=".8"/><path d="M13.6 4Q12.9 3 12 3Q10.2 3 10.2 5Q10.2 7 12 7Q12.9 7 13.6 6" fill="none" stroke="#fff" stroke-width="1.1"/></svg>
<div class="abs" style="left:500px;top:48px;width:23px;height:21px;background:#cce4fb;border:1px solid #8fc1f0"></div>
<svg style="left:504px;top:51px" width="17" height="16" viewBox="0 0 17 16"><path d="M1 15.3H6" stroke="#e9c93a" stroke-width="1.2"/><path d="M2.5 13.5L7.5 8L11 10.5L6.5 14.5Z" fill="#f7df57" stroke="#d7b52a" stroke-width=".6"/><path d="M7.5 8L15.5 0.8L16.2 9L11 10.5Z" fill="#8f8f8f" stroke="#6a6a6a" stroke-width=".5"/></svg>
<svg style="left:529px;top:54px" width="14" height="12" viewBox="0 0 14 12"><circle cx="4.5" cy="3.5" r="2.8" fill="#d6d6d6"/><circle cx="10" cy="4.5" r="2.9" fill="#a9a9a9"/><circle cx="5" cy="8.8" r="3.2" fill="#8f8f8f"/><path d="M3 6.4Q5 5 7 6.4" stroke="#fff" stroke-width=".9" fill="none"/></svg>
<svg style="left:550px;top:51px" width="17" height="16" viewBox="0 0 17 16"><rect x="1.5" y="1.5" width="11" height="12" fill="#fdfcf4" stroke="#c7b27a"/><path d="M3.5 4.5H10.5M3.5 6.5H10.5M3.5 8.5H8M3.5 10.5H8" stroke="#4f7fc0" stroke-width="1"/><path d="M15.5 3.5V9.5H10.5M12.5 7L10 9.5L12.5 12" fill="none" stroke="#d9a12a" stroke-width="1.8"/></svg>
<svg style="left:573px;top:52px" width="15" height="14" viewBox="0 0 15 14"><rect x="0.5" y="0.5" width="13" height="13" fill="#fdfcf4" stroke="#c7b27a"/><rect x="3.5" y="2.5" width="7" height="9" fill="#dfe8f8" stroke="#4f7fc0" stroke-width=".8"/><path d="M5 4.5H9M5 6.5H9M5 8.5H9" stroke="#4f7fc0" stroke-width="1"/></svg>
<svg style="left:596px;top:52px" width="15" height="14" viewBox="0 0 15 14"><rect x="0.5" y="0.5" width="13" height="13" fill="#fdfcf4" stroke="#c7b27a"/><path d="M9.8 3V12M7.2 3V12M10.8 3H6.5Q4 3 4 5.2Q4 7.4 7 7.4" fill="#5b8bd0" stroke="#5b8bd0" stroke-width="1.4"/></svg>
<svg style="left:623px;top:50px" width="17" height="18" viewBox="0 0 17 18"><rect x="6.5" y="4.5" width="9" height="12" fill="#fbfbf6" stroke="#c9cbd2"/><path d="M9 7.5H13M9 10H13" stroke="#b9c6de" stroke-width="1"/><path d="M8 14H12" stroke="#3f6fc0" stroke-width="1.8"/><path d="M3.2 0.8H7V6.5H9.8L5.1 12L0.4 6.5H3.2Z" fill="#fbe08a" stroke="#cf8f12" stroke-width="1" stroke-linejoin="round"/></svg>
<svg style="left:647px;top:57px" width="7" height="4" viewBox="0 0 7 4"><path d="M0 0H7L3.5 4Z" fill="#1a1a1a"/></svg>
<svg style="left:661px;top:50px" width="17" height="18" viewBox="0 0 17 18"><rect x="5.5" y="1.5" width="9" height="12" fill="#fbfbf6" stroke="#c9cbd2"/><path d="M8 7.5H12M8 10H12" stroke="#b9c6de" stroke-width="1"/><path d="M7 4H11" stroke="#3f6fc0" stroke-width="1.8"/><path d="M3.2 17.2H7V11.5H9.8L5.1 6L0.4 11.5H3.2Z" fill="#fbe08a" stroke="#cf8f12" stroke-width="1" stroke-linejoin="round"/></svg>
<svg style="left:685px;top:57px" width="7" height="4" viewBox="0 0 7 4"><path d="M0 0H7L3.5 4Z" fill="#1a1a1a"/></svg>
<svg style="left:698px;top:52px" width="18" height="13" viewBox="0 0 18 13"><path d="M17.5 4H9.5V1L3.5 6.5L9.5 12V9H17.5Z" fill="#f4f4f4" stroke="#bcbcbc"/><path d="M2.5 0.5V5.5M0.3 1.7L4.7 4.3M4.7 1.7L0.3 4.3" stroke="#b0b0b0" stroke-width=".9"/></svg>
<svg style="left:723px;top:52px" width="16" height="13" viewBox="0 0 16 13"><path d="M15.3 4H8.3V0.9L0.9 6.5L8.3 12.1V9H15.3Z" fill="#fdf0b8" stroke="#dc9a14" stroke-width="1.5" stroke-linejoin="round"/></svg>
<svg style="left:746px;top:57px" width="7" height="4" viewBox="0 0 7 4"><path d="M0 0H7L3.5 4Z" fill="#1a1a1a"/></svg>
<svg style="left:761px;top:52px" width="16" height="13" viewBox="0 0 16 13"><path d="M0.5 4H7.5V0.8L15.2 6.5L7.5 12.2V9H0.5Z" fill="#f8f8f8" stroke="#c2c2c2" stroke-width="1.2"/></svg>
<svg style="left:784px;top:57px" width="7" height="4" viewBox="0 0 7 4"><path d="M0 0H7L3.5 4Z" fill="#8a8a8a"/></svg>
<div class="abs" style="left:1690px;top:48px;width:76px;height:21px;background:#fff;border:1px solid #6b6b6b"></div>
<span class="t " style="left:1693.5px;top:51px;letter-spacing:-0.252px;color:#6a6a6a">Quick Access</span>
<svg style="left:1788px;top:51px" width="16" height="16" viewBox="0 0 16 16"><rect x="0.5" y="3.5" width="12" height="11" fill="#fdfcf4" stroke="#8f8a6a"/><path d="M0.5 6.5H12.5M4.5 6.5V14.5" stroke="#8f8a6a"/><rect x="1" y="4" width="11" height="2" fill="#9fb4d8"/><path d="M12.5 0L13.5 2.3L15.8 3.3L13.5 4.3L12.5 6.6L11.5 4.3L9.2 3.3L11.5 2.3Z" fill="#f7d354" stroke="#c69a22" stroke-width="0.6"/></svg>
<div class="abs" style="left:1810px;top:50px;width:1px;height:18px;background:#8a8fa0"></div>
<span class="t " style="left:1817px;top:51px;letter-spacing:0;transform:scaleX(0.86);transform-origin:0 50%">Java EE</span>
<div class="abs" style="left:1864px;top:48px;width:23px;height:21px;background:#cce4fb;border:1px solid #8fc1f0"></div>
<svg style="left:1868px;top:51px" width="16" height="16" viewBox="0 0 16 16"><circle cx="6" cy="5" r="3.6" fill="#7a5a3a"/><circle cx="10.5" cy="6" r="3.3" fill="#3f6fb8"/><circle cx="7" cy="10.5" r="3.6" fill="#4fae61"/><path d="M12 3V12.5Q12 14.5 10 14.3" stroke="#2c63a6" stroke-width="1.6" fill="none"/></svg>
<svg style="left:1891px;top:51px" width="16" height="16" viewBox="0 0 16 16"><path d="M2.5 4.5V1.5H9.5V4.5" fill="#f7df8f" stroke="#c6901a"/><rect x="1.5" y="4.5" width="11" height="10" rx="1" fill="#f7d96a" stroke="#c6901a"/><rect x="6" y="9" width="9.5" height="6" fill="#fff" stroke="#c6901a" stroke-width=".6"/><text x="6.8" y="14" font-family="Liberation Sans" font-size="5" font-weight="bold" fill="#b0701a" letter-spacing="0">GIT</text></svg>
<div class="abs" style="left:2px;top:76px;width:1486px;height:25px"><div class="tabbar"></div><div class="tabsel" style="left:1164px;width:132px"></div></div>
<svg style="left:6px;top:81px" width="16" height="16" viewBox="0 0 16 16"><path d="M3.5 1.5H10.5L13.5 4.5V14.5H3.5Z" fill="#fbfcff" stroke="#b8973f" stroke-width="1"/><path d="M10.5 1.5V4.5H13.5" fill="#f3e7c2" stroke="#b8973f" stroke-width="1"/><path d="M4.5 9H12.5V13.5H4.5Z" fill="#e1e9f7"/><path d="M8.2 4.3H10.6M9.7 4.2V9.6Q9.7 12.1 6.8 11.7" fill="none" stroke="#1f5a9e" stroke-width="2.1"/></svg>
<span class="t " style="left:26px;top:81px;letter-spacing:-0.252px;">Rmain.java</span>
<svg style="left:114px;top:81px" width="16" height="16" viewBox="0 0 16 16"><path d="M3.5 1.5H10.5L13.5 4.5V14.5H3.5Z" fill="#fbfcff" stroke="#b8973f" stroke-width="1"/><path d="M10.5 1.5V4.5H13.5" fill="#f3e7c2" stroke="#b8973f" stroke-width="1"/><path d="M4.5 9H12.5V13.5H4.5Z" fill="#e1e9f7"/><path d="M8.2 4.3H10.6M9.7 4.2V9.6Q9.7 12.1 6.8 11.7" fill="none" stroke="#1f5a9e" stroke-width="2.1"/></svg>
<span class="t " style="left:134px;top:81px;letter-spacing:-0.179px;">NormalRaumsc...</span>
<svg style="left:254px;top:81px" width="16" height="16" viewBox="0 0 16 16"><path d="M3.5 1.5H10.5L13.5 4.5V14.5H3.5Z" fill="#fbfcff" stroke="#b8973f" stroke-width="1"/><path d="M10.5 1.5V4.5H13.5" fill="#f3e7c2" stroke="#b8973f" stroke-width="1"/><path d="M4.5 9H12.5V13.5H4.5Z" fill="#e1e9f7"/><path d="M8.2 4.3H10.6M9.7 4.2V9.6Q9.7 12.1 6.8 11.7" fill="none" stroke="#1f5a9e" stroke-width="2.1"/></svg>
<span class="t " style="left:274px;top:81px;letter-spacing:-0.179px;">NormalRaumsc...</span>
<svg style="left:394px;top:81px" width="16" height="16" viewBox="0 0 16 16"><path d="M3.5 1.5H10.5L13.5 4.5V14.5H3.5Z" fill="#fbfcff" stroke="#b8973f" stroke-width="1"/><path d="M10.5 1.5V4.5H13.5" fill="#f3e7c2" stroke="#b8973f" stroke-width="1"/><path d="M4.5 9H12.5V13.5H4.5Z" fill="#e1e9f7"/><path d="M8.2 4.3H10.6M9.7 4.2V9.6Q9.7 12.1 6.8 11.7" fill="none" stroke="#1f5a9e" stroke-width="2.1"/></svg>
<span class="t " style="left:414px;top:81px;letter-spacing:-0.143px;">Raumschiff.java</span>
<svg style="left:528px;top:81px" width="16" height="16" viewBox="0 0 16 16"><path d="M3.5 1.5H10.5L13.5 4.5V14.5H3.5Z" fill="#fbfcff" stroke="#b8973f" stroke-width="1"/><path d="M10.5 1.5V4.5H13.5" fill="#f3e7c2" stroke="#b8973f" stroke-width="1"/><path d="M4.5 9H12.5V13.5H4.5Z" fill="#e1e9f7"/><path d="M8.2 4.3H10.6M9.7 4.2V9.6Q9.7 12.1 6.8 11.7" fill="none" stroke="#1f5a9e" stroke-width="2.1"/></svg>
<span class="t " style="left:548px;top:81px;letter-spacing:-0.292px;">RadianRotati...</span>
<svg style="left:653px;top:81px" width="16" height="16" viewBox="0 0 16 16"><path d="M3.5 1.5H10.5L13.5 4.5V14.5H3.5Z" fill="#fbfcff" stroke="#b8973f" stroke-width="1"/><path d="M10.5 1.5V4.5H13.5" fill="#f3e7c2" stroke="#b8973f" stroke-width="1"/><path d="M4.5 9H12.5V13.5H4.5Z" fill="#e1e9f7"/><path d="M8.2 4.3H10.6M9.7 4.2V9.6Q9.7 12.1 6.8 11.7" fill="none" stroke="#1f5a9e" stroke-width="2.1"/></svg>
<span class="t " style="left:672.5px;top:81px;letter-spacing:-0.182px;">SuperMath.java</span>
<svg style="left:785px;top:81px" width="16" height="16" viewBox="0 0 16 16"><path d="M3.5 1.5H10.5L13.5 4.5V14.5H3.5Z" fill="#fbfcff" stroke="#b8973f" stroke-width="1"/><path d="M10.5 1.5V4.5H13.5" fill="#f3e7c2" stroke="#b8973f" stroke-width="1"/><path d="M4.5 9H12.5V13.5H4.5Z" fill="#e1e9f7"/><path d="M8.2 4.3H10.6M9.7 4.2V9.6Q9.7 12.1 6.8 11.7" fill="none" stroke="#1f5a9e" stroke-width="2.1"/></svg>
<span class="t " style="left:805px;top:81px;letter-spacing:-0.361px;">LoadedRocke...</span>
<svg style="left:918px;top:81px" width="16" height="16" viewBox="0 0 16 16"><path d="M3.5 1.5H10.5L13.5 4.5V14.5H3.5Z" fill="#fbfcff" stroke="#b8973f" stroke-width="1"/><path d="M10.5 1.5V4.5H13.5" fill="#f3e7c2" stroke="#b8973f" stroke-width="1"/><path d="M4.5 9H12.5V13.5H4.5Z" fill="#e1e9f7"/><path d="M8.2 4.3H10.6M9.7 4.2V9.6Q9.7 12.1 6.8 11.7" fill="none" stroke="#1f5a9e" stroke-width="2.1"/></svg>
<span class="t " style="left:937px;top:81px;letter-spacing:-0.122px;">RocketHandl...</span>
<svg style="left:1050px;top:81px" width="16" height="16" viewBox="0 0 16 16"><path d="M3.5 1.5H10.5L13.5 4.5V14.5H3.5Z" fill="#fbfcff" stroke="#b8973f" stroke-width="1"/><path d="M10.5 1.5V4.5H13.5" fill="#f3e7c2" stroke="#b8973f" stroke-width="1"/><path d="M4.5 9H12.5V13.5H4.5Z" fill="#e1e9f7"/><path d="M8.2 4.3H10.6M9.7 4.2V9.6Q9.7 12.1 6.8 11.7" fill="none" stroke="#1f5a9e" stroke-width="2.1"/></svg>
<span class="t " style="left:1069px;top:81px;letter-spacing:-0.179px;">CraftPlayer....</span>
<svg style="left:1169px;top:81px" width="16" height="16" viewBox="0 0 16 16"><path d="M3.5 1.5H10.5L13.5 4.5V14.5H3.5Z" fill="#fbfcff" stroke="#b8973f" stroke-width="1"/><path d="M10.5 1.5V4.5H13.5" fill="#f3e7c2" stroke="#b8973f" stroke-width="1"/><path d="M4.5 9H12.5V13.5H4.5Z" fill="#e1e9f7"/><path d="M8.2 4.3H10.6M9.7 4.2V9.6Q9.7 12.1 6.8 11.7" fill="none" stroke="#1f5a9e" stroke-width="2.1"/><rect x="0" y="8" width="7" height="8" fill="#e0364c"/><path d="M1.8 10.3L5.2 13.9M5.2 10.3L1.8 13.9" stroke="#fff" stroke-width="1.3" fill="none"/></svg>
<span class="t " style="left:1189px;top:81px;letter-spacing:-0.269px;">BlockChest.java</span>
<svg style="left:1280px;top:85px" width="10" height="10" viewBox="0 0 10 10"><path d="M0.5 0.5H2.6L5 3L7.4 0.5H9.5V2.2L7 4.75L9.5 7.3V9H7.4L5 6.5L2.6 9H0.5V7.3L3 4.75L0.5 2.2Z" fill="#fff" stroke="#5a5a5a" stroke-width="0.9"/></svg>
<svg style="left:1306px;top:82px" width="14" height="14" viewBox="0 0 14 14"><path d="M0.6 0.8L3 3L0.6 5.2M4.2 0.8L6.6 3L4.2 5.2" fill="none" stroke="#111" stroke-width="1.5"/><text x="8.4" y="12.8" font-family="Liberation Sans" font-size="9" fill="#222" letter-spacing="0">2</text></svg>
<svg style="left:1440px;top:83px" width="11" height="5" viewBox="0 0 11 5"><rect x="0.5" y="0.5" width="9" height="3" fill="#fff" stroke="#5a5a5a"/></svg>
<svg style="left:1463px;top:83px" width="11" height="11" viewBox="0 0 11 11"><rect x="0.5" y="0.5" width="9" height="9" fill="#fff" stroke="#5a5a5a"/><rect x="0.5" y="0.5" width="9" height="1.6" fill="#5a5a5a"/></svg>
<div class="panel inact" style="left:1492px;top:75px;width:425px;height:569px"><div class="tabbar" style="background:#f3f5fb;border-bottom-color:#f3f5fb;height:26px"></div><div class="tabsel" style="left:65px;width:120px;box-shadow:none;background:linear-gradient(#d9e3ee,#fff 92%)"></div></div>
<svg style="left:1497px;top:81px" width="17" height="16" viewBox="0 0 17 16"><g opacity=".75"><path d="M0.8 14.5L4 8.4L7.6 11.6Z" fill="#fdf6c8" stroke="#f0d868" stroke-width=".6"/><path d="M4 8.4L6.8 5.6L10.4 8.8L7.6 11.6Z" fill="#b8b6b4" stroke="#9a9894" stroke-width=".6"/><path d="M6.8 5.6L11.6 1L15 2L14.4 5L10.4 8.8Z" fill="#f5cc82" stroke="#d09a3e" stroke-width=".8"/><circle cx="12.2" cy="3.3" r="0.8" fill="#6f8fc8"/></g></svg>
<span class="t gray" style="left:1516px;top:81px;letter-spacing:-0.587px;">Search</span>
<svg style="left:1560px;top:80px" width="18" height="17" viewBox="0 0 18 17"><path d="M1.5 1.5H6.5L9.5 4.5V12.5H1.5Z" fill="#fbfaf2" stroke="#9a9478"/><path d="M3 4.5H6M3 6.5H7.5M3 8.5H7.5" stroke="#5b86c8" stroke-width=".9"/><path d="M5.5 9.5V8H9.5L10.5 9.5H15.5V16.5H5.5Z" fill="#f9d978" stroke="#a9701c" stroke-width="1" stroke-linejoin="round"/><path d="M6.3 10.6H14.7" stroke="#fdf0c0" stroke-width="1"/></svg>
<span class="t " style="left:1580px;top:81px;letter-spacing:-0.302px;">Project Expl...</span>
<svg style="left:1658px;top:85px" width="10" height="10" viewBox="0 0 10 10"><path d="M0.5 0.5H2.6L5 3L7.4 0.5H9.5V2.2L7 4.75L9.5 7.3V9H7.4L5 6.5L2.6 9H0.5V7.3L3 4.75L0.5 2.2Z" fill="#fff" stroke="#5a5a5a" stroke-width="0.9"/></svg>
<svg style="left:1682px;top:81px" width="16" height="16" viewBox="0 0 16 16"><g opacity=".8"><path d="M1.5 1.5H12.5Q14.5 4 12.5 7.5Q14.5 11 12.5 14.5H1.5Z" fill="#f4f1ea" stroke="#c8cad8"/><path d="M1.5 8H12.8M7.5 1.5V14.5" stroke="#d2d6e4" stroke-width=".8"/><circle cx="5" cy="4.6" r="2.4" fill="#e88a94"/><path d="M3 14.5V12Q5 9.5 7 12V14.5Z" fill="#f4c47a"/></g></svg>
<span class="t gray" style="left:1700px;top:81px;letter-spacing:-0.21px;">Problems</span>
<svg style="left:1761px;top:81px" width="17" height="16" viewBox="0 0 17 16"><path d="M2.5 4.5V1.5H9.5V4.5" fill="#fbecc0" stroke="#dcbf7a"/><rect x="1.5" y="4.5" width="11" height="10" rx="1" fill="#fae6a8" stroke="#dcbf7a"/><rect x="5.5" y="9" width="10" height="6" fill="#fff" stroke="#dcbf7a" stroke-width=".6"/><text x="6.5" y="14" font-family="Liberation Sans" font-size="5" font-weight="bold" fill="#c9a468" letter-spacing="0">GIT</text></svg>
<span class="t gray" style="left:1779px;top:81px;letter-spacing:-0.311px;">Git Reposit...</span>
<svg style="left:1871px;top:83px" width="11" height="5" viewBox="0 0 11 5"><rect x="0.5" y="0.5" width="9" height="3" fill="#fff" stroke="#5a5a5a"/></svg>
<svg style="left:1894px;top:83px" width="11" height="11" viewBox="0 0 11 11"><rect x="0.5" y="0.5" width="9" height="9" fill="#fff" stroke="#5a5a5a"/><rect x="0.5" y="0.5" width="9" height="1.6" fill="#5a5a5a"/></svg>
<svg style="left:1813px;top:107px" width="14" height="13" viewBox="0 0 14 13"><rect x="0.5" y="0.5" width="9" height="8" fill="#fff" stroke="#6f8fc4"/><rect x="3.5" y="3.5" width="9" height="8" fill="#fff" stroke="#6f8fc4"/><path d="M5.5 7.5H10.5" stroke="#2b4f8f" stroke-width="1.4"/></svg>
<div class="abs" style="left:1831px;top:103px;width:23px;height:21px;background:#cce4fb;border:1px solid #8fc1f0"></div>
<svg style="left:1834px;top:105px" width="18" height="18" viewBox="0 0 18 18"><path d="M1 5.5L5.5 1V4H13V7H5.5V10Z" fill="#fbe9a8" stroke="#d28f14" stroke-width="1.1" stroke-linejoin="round"/><path d="M17 12.5L12.5 8V11H5V14H12.5V17Z" fill="#fbe9a8" stroke="#d28f14" stroke-width="1.1" stroke-linejoin="round"/></svg>
<div class="abs" style="left:1857px;top:105px;width:1px;height:18px;background:#8a8fa0"></div>
<svg style="left:1866px;top:108px" width="14" height="12" viewBox="0 0 14 12"><circle cx="4.5" cy="3.5" r="2.8" fill="#d2d2d2"/><circle cx="10" cy="4.5" r="2.9" fill="#b4b4b4"/><circle cx="5" cy="8.8" r="3.2" fill="#9c9c9c"/><path d="M3 6.4Q5 5 7 6.4" stroke="#fff" stroke-width=".9" fill="none"/><circle cx="3.8" cy="2.8" r="1" fill="#eee"/><circle cx="9.3" cy="3.7" r="1" fill="#ddd"/></svg>
<svg style="left:1897px;top:109px" width="11" height="6" viewBox="0 0 11 6"><path d="M0.7 0.5H10.3L5.5 5.3Z" fill="#fff" stroke="#555" stroke-width="1"/></svg>
<svg style="left:1579px;top:130px" width="7" height="10" viewBox="0 0 7 10"><path d="M1 0.8L5 5L1 9.2" fill="none" stroke="#a3a3a3" stroke-width="1.9"/></svg>
<svg style="left:1593px;top:126px" width="16" height="16" viewBox="0 0 16 16"><path d="M3.5 1.5H10.5L13.5 4.5V14.5H3.5Z" fill="#fbfcff" stroke="#b8973f" stroke-width="1"/><path d="M10.5 1.5V4.5H13.5" fill="#f3e7c2" stroke="#b8973f" stroke-width="1"/><path d="M4.5 9H12.5V13.5H4.5Z" fill="#e1e9f7"/><path d="M8.2 4.3H10.6M9.7 4.2V9.6Q9.7 12.1 6.8 11.7" fill="none" stroke="#1f5a9e" stroke-width="2.1"/><rect x="0" y="8" width="7" height="8" fill="#e0364c"/><path d="M1.8 10.3L5.2 13.9M5.2 10.3L1.8 13.9" stroke="#fff" stroke-width="1.3" fill="none"/></svg>
<span class="row" style="left:1614px;top:125px;letter-spacing:-0.168px">BlockBrewingStand.java</span>
<svg style="left:1579px;top:148px" width="7" height="10" viewBox="0 0 7 10"><path d="M1 0.8L5 5L1 9.2" fill="none" stroke="#a3a3a3" stroke-width="1.9"/></svg>
<svg style="left:1593px;top:144px" width="16" height="16" viewBox="0 0 16 16"><path d="M3.5 1.5H9.5M3.5 1.5V8M13.5 8V14.5H6" fill="none" stroke="#b8973f" stroke-width="1"/><rect x="4" y="2" width="9" height="12" fill="#eef2fb"/><path d="M8.6 4.5V9.6Q8.6 11.6 6.4 11.3" fill="none" stroke="#3b6ea8" stroke-width="1.5"/><path d="M10.2 6.3L12 0.8L13.8 6.3M10.9 4.4H13.1" fill="none" stroke="#2f9a4a" stroke-width="1.2"/><rect x="0" y="8" width="7" height="8" fill="#e0364c"/><path d="M1.8 10.3L5.2 13.9M5.2 10.3L1.8 13.9" stroke="#fff" stroke-width="1.3" fill="none"/></svg>
<span class="row" style="left:1614px;top:143px;letter-spacing:-0.029px">BlockButtonAbstract.java</span>
<svg style="left:1579px;top:166px" width="7" height="10" viewBox="0 0 7 10"><path d="M1 0.8L5 5L1 9.2" fill="none" stroke="#a3a3a3" stroke-width="1.9"/></svg>
<svg style="left:1593px;top:162px" width="16" height="16" viewBox="0 0 16 16"><path d="M3.5 1.5H10.5L13.5 4.5V14.5H3.5Z" fill="#fbfcff" stroke="#b8973f" stroke-width="1"/><path d="M10.5 1.5V4.5H13.5" fill="#f3e7c2" stroke="#b8973f" stroke-width="1"/><path d="M4.5 9H12.5V13.5H4.5Z" fill="#e1e9f7"/><path d="M8.2 4.3H10.6M9.7 4.2V9.6Q9.7 12.1 6.8 11.7" fill="none" stroke="#1f5a9e" stroke-width="2.1"/><rect x="0" y="8" width="7" height="8" fill="#e0364c"/><path d="M1.8 10.3L5.2 13.9M5.2 10.3L1.8 13.9" stroke="#fff" stroke-width="1.3" fill="none"/></svg>
<span class="row" style="left:1614px;top:161px;letter-spacing:-0.215px">BlockCactus.java</span>
<svg style="left:1579px;top:184px" width="7" height="10" viewBox="0 0 7 10"><path d="M1 0.8L5 5L1 9.2" fill="none" stroke="#a3a3a3" stroke-width="1.9"/></svg>
<svg style="left:1593px;top:180px" width="16" height="16" viewBox="0 0 16 16"><path d="M3.5 1.5H10.5L13.5 4.5V14.5H3.5Z" fill="#fbfcff" stroke="#b8973f" stroke-width="1"/><path d="M10.5 1.5V4.5H13.5" fill="#f3e7c2" stroke="#b8973f" stroke-width="1"/><path d="M4.5 9H12.5V13.5H4.5Z" fill="#e1e9f7"/><path d="M8.2 4.3H10.6M9.7 4.2V9.6Q9.7 12.1 6.8 11.7" fill="none" stroke="#1f5a9e" stroke-width="2.1"/><rect x="0" y="8" width="7" height="8" fill="#e0364c"/><path d="M1.8 10.3L5.2 13.9M5.2 10.3L1.8 13.9" stroke="#fff" stroke-width="1.3" fill="none"/></svg>
<span class="row" style="left:1614px;top:179px;letter-spacing:-0.286px">BlockCake.java</span>
<svg style="left:1579px;top:202px" width="7" height="10" viewBox="0 0 7 10"><path d="M1 0.8L5 5L1 9.2" fill="none" stroke="#a3a3a3" stroke-width="1.9"/></svg>
<svg style="left:1593px;top:198px" width="16" height="16" viewBox="0 0 16 16"><path d="M3.5 1.5H10.5L13.5 4.5V14.5H3.5Z" fill="#fbfcff" stroke="#b8973f" stroke-width="1"/><path d="M10.5 1.5V4.5H13.5" fill="#f3e7c2" stroke="#b8973f" stroke-width="1"/><path d="M4.5 9H12.5V13.5H4.5Z" fill="#e1e9f7"/><path d="M8.2 4.3H10.6M9.7 4.2V9.6Q9.7 12.1 6.8 11.7" fill="none" stroke="#1f5a9e" stroke-width="2.1"/><rect x="0" y="8" width="7" height="8" fill="#e0364c"/><path d="M1.8 10.3L5.2 13.9M5.2 10.3L1.8 13.9" stroke="#fff" stroke-width="1.3" fill="none"/></svg>
<span class="row" style="left:1614px;top:197px;letter-spacing:-0.194px">BlockCarpet.java</span>
<svg style="left:1579px;top:220px" width="7" height="10" viewBox="0 0 7 10"><path d="M1 0.8L5 5L1 9.2" fill="none" stroke="#a3a3a3" stroke-width="1.9"/></svg>
<svg style="left:1593px;top:216px" width="16" height="16" viewBox="0 0 16 16"><path d="M3.5 1.5H10.5L13.5 4.5V14.5H3.5Z" fill="#fbfcff" stroke="#b8973f" stroke-width="1"/><path d="M10.5 1.5V4.5H13.5" fill="#f3e7c2" stroke="#b8973f" stroke-width="1"/><path d="M4.5 9H12.5V13.5H4.5Z" fill="#e1e9f7"/><path d="M8.2 4.3H10.6M9.7 4.2V9.6Q9.7 12.1 6.8 11.7" fill="none" stroke="#1f5a9e" stroke-width="2.1"/></svg>
<span class="row" style="left:1614px;top:215px;letter-spacing:-0.19px">BlockCarrots.java</span>
<svg style="left:1579px;top:238px" width="7" height="10" viewBox="0 0 7 10"><path d="M1 0.8L5 5L1 9.2" fill="none" stroke="#a3a3a3" stroke-width="1.9"/></svg>
<svg style="left:1593px;top:234px" width="16" height="16" viewBox="0 0 16 16"><path d="M3.5 1.5H10.5L13.5 4.5V14.5H3.5Z" fill="#fbfcff" stroke="#b8973f" stroke-width="1"/><path d="M10.5 1.5V4.5H13.5" fill="#f3e7c2" stroke="#b8973f" stroke-width="1"/><path d="M4.5 9H12.5V13.5H4.5Z" fill="#e1e9f7"/><path d="M8.2 4.3H10.6M9.7 4.2V9.6Q9.7 12.1 6.8 11.7" fill="none" stroke="#1f5a9e" stroke-width="2.1"/><rect x="0" y="8" width="7" height="8" fill="#e0364c"/><path d="M1.8 10.3L5.2 13.9M5.2 10.3L1.8 13.9" stroke="#fff" stroke-width="1.3" fill="none"/></svg>
<span class="row" style="left:1614px;top:233px;letter-spacing:-0.105px">BlockCauldron.java</span>
<div class="abs" style="left:1591px;top:251px;width:108px;height:18px;background:#d9d9d9"></div>
<svg style="left:1579px;top:256px" width="7" height="10" viewBox="0 0 7 10"><path d="M1 0.8L5 5L1 9.2" fill="none" stroke="#a3a3a3" stroke-width="1.9"/></svg>
<svg style="left:1593px;top:252px" width="16" height="16" viewBox="0 0 16 16"><path d="M3.5 1.5H10.5L13.5 4.5V14.5H3.5Z" fill="#fbfcff" stroke="#b8973f" stroke-width="1"/><path d="M10.5 1.5V4.5H13.5" fill="#f3e7c2" stroke="#b8973f" stroke-width="1"/><path d="M4.5 9H12.5V13.5H4.5Z" fill="#e1e9f7"/><path d="M8.2 4.3H10.6M9.7 4.2V9.6Q9.7 12.1 6.8 11.7" fill="none" stroke="#1f5a9e" stroke-width="2.1"/><rect x="0" y="8" width="7" height="8" fill="#e0364c"/><path d="M1.8 10.3L5.2 13.9M5.2 10.3L1.8 13.9" stroke="#fff" stroke-width="1.3" fill="none"/></svg>
<span class="row" style="left:1614px;top:251px;letter-spacing:-0.256px">BlockChest.java</span>
<svg style="left:1579px;top:274px" width="7" height="10" viewBox="0 0 7 10"><path d="M1 0.8L5 5L1 9.2" fill="none" stroke="#a3a3a3" stroke-width="1.9"/></svg>
<svg style="left:1593px;top:270px" width="16" height="16" viewBox="0 0 16 16"><path d="M3.5 1.5H10.5L13.5 4.5V14.5H3.5Z" fill="#fbfcff" stroke="#b8973f" stroke-width="1"/><path d="M10.5 1.5V4.5H13.5" fill="#f3e7c2" stroke="#b8973f" stroke-width="1"/><path d="M4.5 9H12.5V13.5H4.5Z" fill="#e1e9f7"/><path d="M8.2 4.3H10.6M9.7 4.2V9.6Q9.7 12.1 6.8 11.7" fill="none" stroke="#1f5a9e" stroke-width="2.1"/><rect x="0" y="8" width="7" height="8" fill="#e0364c"/><path d="M1.8 10.3L5.2 13.9M5.2 10.3L1.8 13.9" stroke="#fff" stroke-width="1.3" fill="none"/></svg>
<span class="row" style="left:1614px;top:269px;letter-spacing:-0.137px">BlockChorusFlower.java</span>
<svg style="left:1579px;top:292px" width="7" height="10" viewBox="0 0 7 10"><path d="M1 0.8L5 5L1 9.2" fill="none" stroke="#a3a3a3" stroke-width="1.9"/></svg>
<svg style="left:1593px;top:288px" width="16" height="16" viewBox="0 0 16 16"><path d="M3.5 1.5H10.5L13.5 4.5V14.5H3.5Z" fill="#fbfcff" stroke="#b8973f" stroke-width="1"/><path d="M10.5 1.5V4.5H13.5" fill="#f3e7c2" stroke="#b8973f" stroke-width="1"/><path d="M4.5 9H12.5V13.5H4.5Z" fill="#e1e9f7"/><path d="M8.2 4.3H10.6M9.7 4.2V9.6Q9.7 12.1 6.8 11.7" fill="none" stroke="#1f5a9e" stroke-width="2.1"/><rect x="0" y="8" width="7" height="8" fill="#e0364c"/><path d="M1.8 10.3L5.2 13.9M5.2 10.3L1.8 13.9" stroke="#fff" stroke-width="1.3" fill="none"/></svg>
<span class="row" style="left:1614px;top:287px;letter-spacing:-0.142px">BlockChorusFruit.java</span>
<svg style="left:1579px;top:310px" width="7" height="10" viewBox="0 0 7 10"><path d="M1 0.8L5 5L1 9.2" fill="none" stroke="#a3a3a3" stroke-width="1.9"/></svg>
<svg style="left:1593px;top:306px" width="16" height="16" viewBox="0 0 16 16"><path d="M3.5 1.5H10.5L13.5 4.5V14.5H3.5Z" fill="#fbfcff" stroke="#b8973f" stroke-width="1"/><path d="M10.5 1.5V4.5H13.5" fill="#f3e7c2" stroke="#b8973f" stroke-width="1"/><path d="M4.5 9H12.5V13.5H4.5Z" fill="#e1e9f7"/><path d="M8.2 4.3H10.6M9.7 4.2V9.6Q9.7 12.1 6.8 11.7" fill="none" stroke="#1f5a9e" stroke-width="2.1"/></svg>
<span class="row" style="left:1614px;top:305px;letter-spacing:-0.165px">BlockClay.java</span>
<svg style="left:1579px;top:328px" width="7" height="10" viewBox="0 0 7 10"><path d="M1 0.8L5 5L1 9.2" fill="none" stroke="#a3a3a3" stroke-width="1.9"/></svg>
<svg style="left:1593px;top:324px" width="16" height="16" viewBox="0 0 16 16"><path d="M3.5 1.5H10.5L13.5 4.5V14.5H3.5Z" fill="#fbfcff" stroke="#b8973f" stroke-width="1"/><path d="M10.5 1.5V4.5H13.5" fill="#f3e7c2" stroke="#b8973f" stroke-width="1"/><path d="M4.5 9H12.5V13.5H4.5Z" fill="#e1e9f7"/><path d="M8.2 4.3H10.6M9.7 4.2V9.6Q9.7 12.1 6.8 11.7" fill="none" stroke="#1f5a9e" stroke-width="2.1"/><rect x="0" y="8" width="7" height="8" fill="#e0364c"/><path d="M1.8 10.3L5.2 13.9M5.2 10.3L1.8 13.9" stroke="#fff" stroke-width="1.3" fill="none"/></svg>
<span class="row" style="left:1614px;top:323px;letter-spacing:-0.087px">BlockCloth.java</span>
<svg style="left:1579px;top:346px" width="7" height="10" viewBox="0 0 7 10"><path d="M1 0.8L5 5L1 9.2" fill="none" stroke="#a3a3a3" stroke-width="1.9"/></svg>
<svg style="left:1593px;top:342px" width="16" height="16" viewBox="0 0 16 16"><path d="M3.5 1.5H10.5L13.5 4.5V14.5H3.5Z" fill="#fbfcff" stroke="#b8973f" stroke-width="1"/><path d="M10.5 1.5V4.5H13.5" fill="#f3e7c2" stroke="#b8973f" stroke-width="1"/><path d="M4.5 9H12.5V13.5H4.5Z" fill="#e1e9f7"/><path d="M8.2 4.3H10.6M9.7 4.2V9.6Q9.7 12.1 6.8 11.7" fill="none" stroke="#1f5a9e" stroke-width="2.1"/><rect x="0" y="8" width="7" height="8" fill="#e0364c"/><path d="M1.8 10.3L5.2 13.9M5.2 10.3L1.8 13.9" stroke="#fff" stroke-width="1.3" fill="none"/></svg>
<span class="row" style="left:1614px;top:341px;letter-spacing:-0.1px">BlockCobbleWall.java</span>
<svg style="left:1579px;top:364px" width="7" height="10" viewBox="0 0 7 10"><path d="M1 0.8L5 5L1 9.2" fill="none" stroke="#a3a3a3" stroke-width="1.9"/></svg>
<svg style="left:1593px;top:360px" width="16" height="16" viewBox="0 0 16 16"><path d="M3.5 1.5H10.5L13.5 4.5V14.5H3.5Z" fill="#fbfcff" stroke="#b8973f" stroke-width="1"/><path d="M10.5 1.5V4.5H13.5" fill="#f3e7c2" stroke="#b8973f" stroke-width="1"/><path d="M4.5 9H12.5V13.5H4.5Z" fill="#e1e9f7"/><path d="M8.2 4.3H10.6M9.7 4.2V9.6Q9.7 12.1 6.8 11.7" fill="none" stroke="#1f5a9e" stroke-width="2.1"/><rect x="0" y="8" width="7" height="8" fill="#e0364c"/><path d="M1.8 10.3L5.2 13.9M5.2 10.3L1.8 13.9" stroke="#fff" stroke-width="1.3" fill="none"/></svg>
<span class="row" style="left:1614px;top:359px;letter-spacing:-0.199px">BlockCocoa.java</span>
<svg style="left:1579px;top:382px" width="7" height="10" viewBox="0 0 7 10"><path d="M1 0.8L5 5L1 9.2" fill="none" stroke="#a3a3a3" stroke-width="1.9"/></svg>
<svg style="left:1593px;top:378px" width="16" height="16" viewBox="0 0 16 16"><path d="M3.5 1.5H10.5L13.5 4.5V14.5H3.5Z" fill="#fbfcff" stroke="#b8973f" stroke-width="1"/><path d="M10.5 1.5V4.5H13.5" fill="#f3e7c2" stroke="#b8973f" stroke-width="1"/><path d="M4.5 9H12.5V13.5H4.5Z" fill="#e1e9f7"/><path d="M8.2 4.3H10.6M9.7 4.2V9.6Q9.7 12.1 6.8 11.7" fill="none" stroke="#1f5a9e" stroke-width="2.1"/><rect x="0" y="8" width="7" height="8" fill="#e0364c"/><path d="M1.8 10.3L5.2 13.9M5.2 10.3L1.8 13.9" stroke="#fff" stroke-width="1.3" fill="none"/></svg>
<span class="row" style="left:1614px;top:377px;letter-spacing:-0.02px">BlockCommand.java</span>
<svg style="left:1579px;top:400px" width="7" height="10" viewBox="0 0 7 10"><path d="M1 0.8L5 5L1 9.2" fill="none" stroke="#a3a3a3" stroke-width="1.9"/></svg>
<svg style="left:1593px;top:396px" width="16" height="16" viewBox="0 0 16 16"><path d="M3.5 1.5H10.5L13.5 4.5V14.5H3.5Z" fill="#fbfcff" stroke="#b8973f" stroke-width="1"/><path d="M10.5 1.5V4.5H13.5" fill="#f3e7c2" stroke="#b8973f" stroke-width="1"/><path d="M4.5 9H12.5V13.5H4.5Z" fill="#e1e9f7"/><path d="M8.2 4.3H10.6M9.7 4.2V9.6Q9.7 12.1 6.8 11.7" fill="none" stroke="#1f5a9e" stroke-width="2.1"/><rect x="0" y="8" width="7" height="8" fill="#e0364c"/><path d="M1.8 10.3L5.2 13.9M5.2 10.3L1.8 13.9" stroke="#fff" stroke-width="1.3" fill="none"/></svg>
<span class="row" style="left:1614px;top:395px;letter-spacing:-0.121px">BlockConcretePowder.java</span>
<svg style="left:1579px;top:418px" width="7" height="10" viewBox="0 0 7 10"><path d="M1 0.8L5 5L1 9.2" fill="none" stroke="#a3a3a3" stroke-width="1.9"/></svg>
<svg style="left:1593px;top:414px" width="16" height="16" viewBox="0 0 16 16"><path d="M3.5 1.5H10.5L13.5 4.5V14.5H3.5Z" fill="#fbfcff" stroke="#b8973f" stroke-width="1"/><path d="M10.5 1.5V4.5H13.5" fill="#f3e7c2" stroke="#b8973f" stroke-width="1"/><path d="M4.5 9H12.5V13.5H4.5Z" fill="#e1e9f7"/><path d="M8.2 4.3H10.6M9.7 4.2V9.6Q9.7 12.1 6.8 11.7" fill="none" stroke="#1f5a9e" stroke-width="2.1"/><rect x="0" y="8" width="7" height="8" fill="#e0364c"/><path d="M1.8 10.3L5.2 13.9M5.2 10.3L1.8 13.9" stroke="#fff" stroke-width="1.3" fill="none"/></svg>
<span class="row" style="left:1614px;top:413px;letter-spacing:-0.207px">BlockCrops.java</span>
<svg style="left:1579px;top:436px" width="7" height="10" viewBox="0 0 7 10"><path d="M1 0.8L5 5L1 9.2" fill="none" stroke="#a3a3a3" stroke-width="1.9"/></svg>
<svg style="left:1593px;top:432px" width="16" height="16" viewBox="0 0 16 16"><path d="M3.5 1.5H9.5M3.5 1.5V8M13.5 8V14.5H6" fill="none" stroke="#b8973f" stroke-width="1"/><rect x="4" y="2" width="9" height="12" fill="#eef2fb"/><path d="M8.6 4.5V9.6Q8.6 11.6 6.4 11.3" fill="none" stroke="#3b6ea8" stroke-width="1.5"/><path d="M10.2 6.3L12 0.8L13.8 6.3M10.9 4.4H13.1" fill="none" stroke="#2f9a4a" stroke-width="1.2"/><rect x="0" y="8" width="7" height="8" fill="#e0364c"/><path d="M1.8 10.3L5.2 13.9M5.2 10.3L1.8 13.9" stroke="#fff" stroke-width="1.3" fill="none"/></svg>
<span class="row" style="left:1614px;top:431px;letter-spacing:-0.162px">BlockDataAbstract.java</span>
<svg style="left:1579px;top:454px" width="7" height="10" viewBox="0 0 7 10"><path d="M1 0.8L5 5L1 9.2" fill="none" stroke="#a3a3a3" stroke-width="1.9"/></svg>
<svg style="left:1593px;top:450px" width="16" height="16" viewBox="0 0 16 16"><path d="M3.5 1.5H10.5L13.5 4.5V14.5H3.5Z" fill="#fbfcff" stroke="#b8973f" stroke-width="1"/><path d="M10.5 1.5V4.5H13.5" fill="#f3e7c2" stroke="#b8973f" stroke-width="1"/><path d="M4.5 9H12.5V13.5H4.5Z" fill="#e1e9f7"/><path d="M8.2 4.3H10.6M9.7 4.2V9.6Q9.7 12.1 6.8 11.7" fill="none" stroke="#1f5a9e" stroke-width="2.1"/><rect x="0" y="8" width="7" height="8" fill="#e0364c"/><path d="M1.8 10.3L5.2 13.9M5.2 10.3L1.8 13.9" stroke="#fff" stroke-width="1.3" fill="none"/></svg>
<span class="row" style="left:1614px;top:449px;letter-spacing:-0.044px">BlockDaylightDetector.java</span>
<svg style="left:1579px;top:472px" width="7" height="10" viewBox="0 0 7 10"><path d="M1 0.8L5 5L1 9.2" fill="none" stroke="#a3a3a3" stroke-width="1.9"/></svg>
<svg style="left:1593px;top:468px" width="16" height="16" viewBox="0 0 16 16"><path d="M3.5 1.5H10.5L13.5 4.5V14.5H3.5Z" fill="#fbfcff" stroke="#b8973f" stroke-width="1"/><path d="M10.5 1.5V4.5H13.5" fill="#f3e7c2" stroke="#b8973f" stroke-width="1"/><path d="M4.5 9H12.5V13.5H4.5Z" fill="#e1e9f7"/><path d="M8.2 4.3H10.6M9.7 4.2V9.6Q9.7 12.1 6.8 11.7" fill="none" stroke="#1f5a9e" stroke-width="2.1"/><rect x="0" y="8" width="7" height="8" fill="#e0364c"/><path d="M1.8 10.3L5.2 13.9M5.2 10.3L1.8 13.9" stroke="#fff" stroke-width="1.3" fill="none"/></svg>
<span class="row" style="left:1614px;top:467px;letter-spacing:-0.291px">BlockDeadBush.java</span>
<svg style="left:1579px;top:490px" width="7" height="10" viewBox="0 0 7 10"><path d="M1 0.8L5 5L1 9.2" fill="none" stroke="#a3a3a3" stroke-width="1.9"/></svg>
<svg style="left:1593px;top:486px" width="16" height="16" viewBox="0 0 16 16"><path d="M3.5 1.5H9.5M3.5 1.5V8M13.5 8V14.5H6" fill="none" stroke="#b8973f" stroke-width="1"/><rect x="4" y="2" width="9" height="12" fill="#eef2fb"/><path d="M8.6 4.5V9.6Q8.6 11.6 6.4 11.3" fill="none" stroke="#3b6ea8" stroke-width="1.5"/><path d="M10.2 6.3L12 0.8L13.8 6.3M10.9 4.4H13.1" fill="none" stroke="#2f9a4a" stroke-width="1.2"/><rect x="0" y="8" width="7" height="8" fill="#e0364c"/><path d="M1.8 10.3L5.2 13.9M5.2 10.3L1.8 13.9" stroke="#fff" stroke-width="1.3" fill="none"/></svg>
<span class="row" style="left:1614px;top:485px;letter-spacing:-0.111px">BlockDiodeAbstract.java</span>
<svg style="left:1579px;top:508px" width="7" height="10" viewBox="0 0 7 10"><path d="M1 0.8L5 5L1 9.2" fill="none" stroke="#a3a3a3" stroke-width="1.9"/></svg>
<svg style="left:1593px;top:504px" width="16" height="16" viewBox="0 0 16 16"><path d="M3.5 1.5H9.5M3.5 1.5V8M13.5 8V14.5H6" fill="none" stroke="#b8973f" stroke-width="1"/><rect x="4" y="2" width="9" height="12" fill="#eef2fb"/><path d="M8.6 4.5V9.6Q8.6 11.6 6.4 11.3" fill="none" stroke="#3b6ea8" stroke-width="1.5"/><path d="M10.2 6.3L12 0.8L13.8 6.3M10.9 4.4H13.1" fill="none" stroke="#2f9a4a" stroke-width="1.2"/></svg>
<span class="row" style="left:1614px;top:503px;letter-spacing:-0.08px">BlockDirectional.java</span>
<svg style="left:1579px;top:526px" width="7" height="10" viewBox="0 0 7 10"><path d="M1 0.8L5 5L1 9.2" fill="none" stroke="#a3a3a3" stroke-width="1.9"/></svg>
<svg style="left:1593px;top:522px" width="16" height="16" viewBox="0 0 16 16"><path d="M3.5 1.5H10.5L13.5 4.5V14.5H3.5Z" fill="#fbfcff" stroke="#b8973f" stroke-width="1"/><path d="M10.5 1.5V4.5H13.5" fill="#f3e7c2" stroke="#b8973f" stroke-width="1"/><path d="M4.5 9H12.5V13.5H4.5Z" fill="#e1e9f7"/><path d="M8.2 4.3H10.6M9.7 4.2V9.6Q9.7 12.1 6.8 11.7" fill="none" stroke="#1f5a9e" stroke-width="2.1"/><rect x="0" y="8" width="7" height="8" fill="#e0364c"/><path d="M1.8 10.3L5.2 13.9M5.2 10.3L1.8 13.9" stroke="#fff" stroke-width="1.3" fill="none"/></svg>
<span class="row" style="left:1614px;top:521px;letter-spacing:-0.125px">BlockDirt.java</span>
<svg style="left:1579px;top:544px" width="7" height="10" viewBox="0 0 7 10"><path d="M1 0.8L5 5L1 9.2" fill="none" stroke="#a3a3a3" stroke-width="1.9"/></svg>
<svg style="left:1593px;top:540px" width="16" height="16" viewBox="0 0 16 16"><path d="M3.5 1.5H10.5L13.5 4.5V14.5H3.5Z" fill="#fbfcff" stroke="#b8973f" stroke-width="1"/><path d="M10.5 1.5V4.5H13.5" fill="#f3e7c2" stroke="#b8973f" stroke-width="1"/><path d="M4.5 9H12.5V13.5H4.5Z" fill="#e1e9f7"/><path d="M8.2 4.3H10.6M9.7 4.2V9.6Q9.7 12.1 6.8 11.7" fill="none" stroke="#1f5a9e" stroke-width="2.1"/><rect x="0" y="8" width="7" height="8" fill="#e0364c"/><path d="M1.8 10.3L5.2 13.9M5.2 10.3L1.8 13.9" stroke="#fff" stroke-width="1.3" fill="none"/></svg>
<span class="row" style="left:1614px;top:539px;letter-spacing:-0.234px">BlockDispenser.java</span>
<svg style="left:1579px;top:562px" width="7" height="10" viewBox="0 0 7 10"><path d="M1 0.8L5 5L1 9.2" fill="none" stroke="#a3a3a3" stroke-width="1.9"/></svg>
<svg style="left:1593px;top:558px" width="16" height="16" viewBox="0 0 16 16"><path d="M3.5 1.5H10.5L13.5 4.5V14.5H3.5Z" fill="#fbfcff" stroke="#b8973f" stroke-width="1"/><path d="M10.5 1.5V4.5H13.5" fill="#f3e7c2" stroke="#b8973f" stroke-width="1"/><path d="M4.5 9H12.5V13.5H4.5Z" fill="#e1e9f7"/><path d="M8.2 4.3H10.6M9.7 4.2V9.6Q9.7 12.1 6.8 11.7" fill="none" stroke="#1f5a9e" stroke-width="2.1"/><rect x="0" y="8" width="7" height="8" fill="#e0364c"/><path d="M1.8 10.3L5.2 13.9M5.2 10.3L1.8 13.9" stroke="#fff" stroke-width="1.3" fill="none"/></svg>
<span class="row" style="left:1614px;top:557px;letter-spacing:-0.103px">BlockDoor.java</span>
<svg style="left:1579px;top:580px" width="7" height="10" viewBox="0 0 7 10"><path d="M1 0.8L5 5L1 9.2" fill="none" stroke="#a3a3a3" stroke-width="1.9"/></svg>
<svg style="left:1593px;top:576px" width="16" height="16" viewBox="0 0 16 16"><path d="M3.5 1.5H10.5L13.5 4.5V14.5H3.5Z" fill="#fbfcff" stroke="#b8973f" stroke-width="1"/><path d="M10.5 1.5V4.5H13.5" fill="#f3e7c2" stroke="#b8973f" stroke-width="1"/><path d="M4.5 9H12.5V13.5H4.5Z" fill="#e1e9f7"/><path d="M8.2 4.3H10.6M9.7 4.2V9.6Q9.7 12.1 6.8 11.7" fill="none" stroke="#1f5a9e" stroke-width="2.1"/><rect x="0" y="8" width="7" height="8" fill="#e0364c"/><path d="M1.8 10.3L5.2 13.9M5.2 10.3L1.8 13.9" stroke="#fff" stroke-width="1.3" fill="none"/></svg>
<span class="row" style="left:1614px;top:575px;letter-spacing:-0.19px">BlockDoubleStep.java</span>
<svg style="left:1579px;top:598px" width="7" height="10" viewBox="0 0 7 10"><path d="M1 0.8L5 5L1 9.2" fill="none" stroke="#a3a3a3" stroke-width="1.9"/></svg>
<svg style="left:1593px;top:594px" width="16" height="16" viewBox="0 0 16 16"><path d="M3.5 1.5H9.5M3.5 1.5V8M13.5 8V14.5H6" fill="none" stroke="#b8973f" stroke-width="1"/><rect x="4" y="2" width="9" height="12" fill="#eef2fb"/><path d="M8.6 4.5V9.6Q8.6 11.6 6.4 11.3" fill="none" stroke="#3b6ea8" stroke-width="1.5"/><path d="M10.2 6.3L12 0.8L13.8 6.3M10.9 4.4H13.1" fill="none" stroke="#2f9a4a" stroke-width="1.2"/><rect x="0" y="8" width="7" height="8" fill="#e0364c"/><path d="M1.8 10.3L5.2 13.9M5.2 10.3L1.8 13.9" stroke="#fff" stroke-width="1.3" fill="none"/></svg>
<span class="row" style="left:1614px;top:593px;letter-spacing:-0.14px">BlockDoubleStepAbstract.java</span>
<svg style="left:1579px;top:616px" width="7" height="10" viewBox="0 0 7 10"><path d="M1 0.8L5 5L1 9.2" fill="none" stroke="#a3a3a3" stroke-width="1.9"/></svg>
<svg style="left:1593px;top:612px" width="16" height="16" viewBox="0 0 16 16"><path d="M3.5 1.5H10.5L13.5 4.5V14.5H3.5Z" fill="#fbfcff" stroke="#b8973f" stroke-width="1"/><path d="M10.5 1.5V4.5H13.5" fill="#f3e7c2" stroke="#b8973f" stroke-width="1"/><path d="M4.5 9H12.5V13.5H4.5Z" fill="#e1e9f7"/><path d="M8.2 4.3H10.6M9.7 4.2V9.6Q9.7 12.1 6.8 11.7" fill="none" stroke="#1f5a9e" stroke-width="2.1"/></svg>
<span class="row" style="left:1614px;top:611px;letter-spacing:-0.232px">BlockDoubleStoneStep2.java</span>
<div class="abs" style="left:1495px;top:626px;width:420px;height:16px;background:#fff;border-radius:0 0 5px 5px"></div>
<div class="sb" style="left:1899px;top:127px;width:17px;height:499px"></div><div class="thumb" style="left:1900px;top:173px;width:15px;height:18px"></div><svg style="left:1903px;top:133px" width="9" height="6" viewBox="0 0 9 6"><path d="M0.8 5.2L4.5 1.4L8.2 5.2" fill="none" stroke="#4d4d4d" stroke-width="2"/></svg><svg style="left:1903px;top:615px" width="9" height="6" viewBox="0 0 9 6"><path d="M0.8 0.8L4.5 4.6L8.2 0.8" fill="none" stroke="#4d4d4d" stroke-width="2"/></svg>
<div class="sb" style="left:1495px;top:626px;width:404px;height:15px"></div><div class="thumb" style="left:1512px;top:627px;width:313px;height:13px"></div><svg style="left:1501px;top:629px" width="6" height="9" viewBox="0 0 6 9"><path d="M5.2 0.8L1.4 4.5L5.2 8.2" fill="none" stroke="#4d4d4d" stroke-width="2"/></svg><svg style="left:1887px;top:629px" width="6" height="9" viewBox="0 0 6 9"><path d="M0.8 0.8L4.6 4.5L0.8 8.2" fill="none" stroke="#4d4d4d" stroke-width="2"/></svg>
<div class="panel inact" style="left:1492px;top:649px;width:425px;height:364px"><div class="tabbar" style="background:#f3f5fb;border-bottom-color:#f3f5fb;height:26px"></div><div class="tabsel" style="left:0px;width:90px;box-shadow:none;background:linear-gradient(#d9e3ee,#fff 92%)"></div></div><div class="abs" style="left:1724px;top:677px;width:187px;height:22px;background:#f3f4fa"></div>
<svg style="left:1498px;top:656px" width="14" height="14" viewBox="0 0 14 14"><rect x="0.5" y="0.5" width="5" height="5" fill="#fff" stroke="#3b6fb0"/><rect x="0.5" y="8.5" width="5" height="5" fill="#fff" stroke="#3b6fb0"/><rect x="8" y="2" width="3" height="1.6" fill="#3b6fb0"/><rect x="8" y="6" width="3" height="1.6" fill="#3b6fb0"/><rect x="8" y="10.5" width="3" height="1.6" fill="#3b6fb0"/><rect x="12" y="2" width="1.6" height="1.6" fill="#3b6fb0"/><rect x="12" y="6" width="1.6" height="1.6" fill="#3b6fb0"/></svg>
<span class="t " style="left:1516px;top:655px;letter-spacing:0.104px;">Outline</span>
<svg style="left:1564px;top:659px" width="10" height="10" viewBox="0 0 10 10"><path d="M0.5 0.5H2.6L5 3L7.4 0.5H9.5V2.2L7 4.75L9.5 7.3V9H7.4L5 6.5L2.6 9H0.5V7.3L3 4.75L0.5 2.2Z" fill="#fff" stroke="#5a5a5a" stroke-width="0.9"/></svg>
<svg style="left:1586px;top:655px" width="16" height="16" viewBox="0 0 16 16"><rect x="3.5" y="1.5" width="10" height="13" rx="1" fill="#f6f1e4" stroke="#d8cba8"/><circle cx="6" cy="6" r="4.5" fill="#f3a9a9" stroke="#e07a7a"/><path d="M4.5 4.5L7.5 7.5M7.5 4.5L4.5 7.5" stroke="#fff" stroke-width="1.1"/></svg>
<span class="t gray" style="left:1606px;top:655px;letter-spacing:-0.363px;">Error Log</span>
<svg style="left:1666px;top:657px" width="16" height="13" viewBox="0 0 16 13"><rect x="0.5" y="1.5" width="12" height="3" fill="#c8d6c0" stroke="#a9b8a0"/><rect x="0.5" y="6.5" width="8" height="3" fill="#c8d6c0" stroke="#a9b8a0"/><circle cx="12" cy="9.5" r="3" fill="#fff" stroke="#7fb889" stroke-width="1.3"/></svg>
<span class="t gray" style="left:1684px;top:655px;letter-spacing:-0.471px;">Progress</span>
<svg style="left:1871px;top:658px" width="11" height="5" viewBox="0 0 11 5"><rect x="0.5" y="0.5" width="9" height="3" fill="#fff" stroke="#5a5a5a"/></svg>
<svg style="left:1894px;top:658px" width="11" height="11" viewBox="0 0 11 11"><rect x="0.5" y="0.5" width="9" height="9" fill="#fff" stroke="#5a5a5a"/><rect x="0.5" y="0.5" width="9" height="1.6" fill="#5a5a5a"/></svg>
<svg style="left:1729px;top:681px" width="14" height="12" viewBox="0 0 14 12"><circle cx="4.5" cy="3.5" r="2.8" fill="#d2d2d2"/><circle cx="10" cy="4.5" r="2.9" fill="#b4b4b4"/><circle cx="5" cy="8.8" r="3.2" fill="#9c9c9c"/><path d="M3 6.4Q5 5 7 6.4" stroke="#fff" stroke-width=".9" fill="none"/><circle cx="3.8" cy="2.8" r="1" fill="#eee"/><circle cx="9.3" cy="3.7" r="1" fill="#ddd"/></svg>
<svg style="left:1752px;top:681px" width="14" height="13" viewBox="0 0 14 13"><rect x="0.5" y="0.5" width="9" height="8" fill="#eef3fb" stroke="#9db2d4"/><rect x="3.5" y="3.5" width="9" height="8" fill="#eef3fb" stroke="#8fa6cc"/><path d="M5.5 7.5H10.5" stroke="#1f4f9a" stroke-width="1.5"/></svg>
<div class="abs" style="left:1770px;top:677px;width:23px;height:21px;background:#cce4fb;border:1px solid #8fc1f0"></div>
<div class="abs" style="left:1793px;top:677px;width:23px;height:21px;background:#cce4fb;border:1px solid #8fc1f0"></div>
<div class="abs" style="left:1862px;top:677px;width:23px;height:21px;background:#cce4fb;border:1px solid #8fc1f0"></div>
<svg style="left:1774px;top:680px" width="18" height="17" viewBox="0 0 18 17"><path d="M3 2V13.5M0.9 11L3 14L5.1 11" fill="none" stroke="#3a4a6a" stroke-width="1.1"/><text x="6" y="8.5" font-family="Liberation Sans" font-size="11" font-weight="bold" fill="#1f8a5a" letter-spacing="0">a</text><text x="10.5" y="15.8" font-family="Liberation Sans" font-size="11" font-weight="bold" fill="#a82f8a" letter-spacing="0">z</text></svg>
<svg style="left:1797px;top:680px" width="17" height="16" viewBox="0 0 17 16"><circle cx="8.5" cy="8.5" r="4.6" fill="#3f93dc" stroke="#2f7ac4" stroke-width=".8"/><path d="M6 7H11M8.5 7V11" stroke="#fff" stroke-width="1.5"/><path d="M2 1.5L15 15" stroke="#1a2f7a" stroke-width="1.3"/></svg>
<svg style="left:1820px;top:680px" width="17" height="16" viewBox="0 0 17 16"><circle cx="7" cy="10" r="3.3" fill="#a6a6a6" stroke="#8a8a8a" stroke-width=".6"/><path d="M1.5 4.5L11.5 15" stroke="#1a2f7a" stroke-width="1.3"/><text x="10.8" y="7" font-family="Liberation Sans" font-size="8" font-weight="bold" fill="#3a7ac4" letter-spacing="0">S</text></svg>
<svg style="left:1845px;top:683px" width="10" height="10" viewBox="0 0 10 10"><circle cx="5" cy="5" r="3.6" fill="#4fa961" stroke="#2f8a45" stroke-width="0.9"/><circle cx="4.2" cy="4" r="1.5" fill="#9fd6a8"/></svg>
<svg style="left:1866px;top:680px" width="17" height="16" viewBox="0 0 17 16"><circle cx="7" cy="10" r="3.3" fill="#a6a6a6" stroke="#8a8a8a" stroke-width=".6"/><path d="M1.5 4.5L11.5 15" stroke="#1a2f7a" stroke-width="1.3"/><text x="11.2" y="7" font-family="Liberation Sans" font-size="8" font-weight="bold" fill="#3a7ac4" letter-spacing="0">L</text></svg>
<svg style="left:1897px;top:683px" width="11" height="6" viewBox="0 0 11 6"><path d="M0.7 0.5H10.3L5.5 5.3Z" fill="#fff" stroke="#555" stroke-width="1"/></svg>
<div class="abs" style="left:1496px;top:700px;width:403px;height:295px;overflow:hidden">
<svg style="left:55px;top:4px" width="10" height="10" viewBox="0 0 10 10"><circle cx="5" cy="5" r="3.6" fill="#4fa961" stroke="#2f8a45" stroke-width="0.9"/><circle cx="4.2" cy="4" r="1.5" fill="#9fd6a8"/></svg>
<svg style="left:67px;top:9px" width="8" height="5" viewBox="0 0 8 5"><path d="M0.6 4.3L3.6 0.8L6.6 4.3Z" fill="#7fc08a" stroke="#5a3fa8" stroke-width="1"/></svg>
<span class="row" style="left:79px;top:-1px;letter-spacing:-0.08px">canPlace(World, BlockPosition) <span class="ret">: boolean</span></span>
<svg style="left:57px;top:24px" width="8" height="8" viewBox="0 0 8 8"><rect x="0.5" y="0.5" width="6" height="6" fill="#f0707e" stroke="#d23a50" stroke-width="1"/></svg>
<svg style="left:52px;top:26px" width="7" height="8" viewBox="0 0 7 8"><rect x="0" y="0" width="7" height="8" fill="#e0364c"/><path d="M1.8 2.3L5.2 5.9M5.2 2.3L1.8 5.9" stroke="#fff" stroke-width="1.3" fill="none"/></svg>
<span class="row" style="left:79px;top:17px;letter-spacing:-0.027px">d(World, BlockPosition) <span class="ret">: boolean</span></span>
<svg style="left:57px;top:42px" width="8" height="8" viewBox="0 0 8 8"><rect x="0.5" y="0.5" width="6" height="6" fill="#f0707e" stroke="#d23a50" stroke-width="1"/></svg>
<span class="row" style="left:79px;top:35px;letter-spacing:-0.061px">e(World, BlockPosition) <span class="ret">: boolean</span></span>
<svg style="left:55px;top:58px" width="10" height="10" viewBox="0 0 10 10"><circle cx="5" cy="5" r="3.6" fill="#4fa961" stroke="#2f8a45" stroke-width="0.9"/><circle cx="4.2" cy="4" r="1.5" fill="#9fd6a8"/></svg>
<svg style="left:52px;top:62px" width="7" height="8" viewBox="0 0 7 8"><rect x="0" y="0" width="7" height="8" fill="#e0364c"/><path d="M1.8 2.3L5.2 5.9M5.2 2.3L1.8 5.9" stroke="#fff" stroke-width="1.3" fill="none"/></svg>
<span class="row" style="left:79px;top:53px;letter-spacing:-0.142px">e(World, BlockPosition, IBlockData) <span class="ret">: IBlockData</span></span>
<div class="abs" style="left:50px;top:71px;width:281px;height:18px;background:#d9d9d9"></div>
<svg style="left:55px;top:76px" width="10" height="10" viewBox="0 0 10 10"><circle cx="5" cy="5" r="3.6" fill="#4fa961" stroke="#2f8a45" stroke-width="0.9"/><circle cx="4.2" cy="4" r="1.5" fill="#9fd6a8"/></svg>
<svg style="left:52px;top:80px" width="7" height="8" viewBox="0 0 7 8"><rect x="0" y="0" width="7" height="8" fill="#e0364c"/><path d="M1.8 2.3L5.2 5.9M5.2 2.3L1.8 5.9" stroke="#fff" stroke-width="1.3" fill="none"/></svg>
<span class="row" style="left:79px;top:71px;letter-spacing:-0.12px">f(World, BlockPosition, IBlockData) <span class="">: IBlockData</span></span>
<svg style="left:55px;top:94px" width="10" height="10" viewBox="0 0 10 10"><circle cx="5" cy="5" r="3.6" fill="#4fa961" stroke="#2f8a45" stroke-width="0.9"/><circle cx="4.2" cy="4" r="1.5" fill="#9fd6a8"/></svg>
<svg style="left:52px;top:98px" width="7" height="8" viewBox="0 0 7 8"><rect x="0" y="0" width="7" height="8" fill="#e0364c"/><path d="M1.8 2.3L5.2 5.9M5.2 2.3L1.8 5.9" stroke="#fff" stroke-width="1.3" fill="none"/></svg>
<svg style="left:67px;top:99px" width="8" height="5" viewBox="0 0 8 5"><path d="M0.6 4.3L3.6 0.8L6.6 4.3Z" fill="#7fc08a" stroke="#5a3fa8" stroke-width="1"/></svg>
<span class="row" style="left:79px;top:89px;letter-spacing:-0.117px">fromLegacyData(int) <span class="ret">: IBlockData</span></span>
<svg style="left:55px;top:112px" width="10" height="10" viewBox="0 0 10 10"><circle cx="5" cy="5" r="3.6" fill="#4fa961" stroke="#2f8a45" stroke-width="0.9"/><circle cx="4.2" cy="4" r="1.5" fill="#9fd6a8"/></svg>
<svg style="left:52px;top:116px" width="7" height="8" viewBox="0 0 7 8"><rect x="0" y="0" width="7" height="8" fill="#e0364c"/><path d="M1.8 2.3L5.2 5.9M5.2 2.3L1.8 5.9" stroke="#fff" stroke-width="1.3" fill="none"/></svg>
<span class="row" style="left:79px;top:107px;letter-spacing:-0.005px">getInventory(World, BlockPosition) <span class="ret">: ITileInventory</span></span>
<svg style="left:55px;top:130px" width="10" height="10" viewBox="0 0 10 10"><circle cx="5" cy="5" r="3.6" fill="#4fa961" stroke="#2f8a45" stroke-width="0.9"/><circle cx="4.2" cy="4" r="1.5" fill="#9fd6a8"/></svg>
<svg style="left:52px;top:134px" width="7" height="8" viewBox="0 0 7 8"><rect x="0" y="0" width="7" height="8" fill="#e0364c"/><path d="M1.8 2.3L5.2 5.9M5.2 2.3L1.8 5.9" stroke="#fff" stroke-width="1.3" fill="none"/></svg>
<svg style="left:67px;top:135px" width="8" height="5" viewBox="0 0 8 5"><path d="M0.6 4.3L3.6 0.8L6.6 4.3Z" fill="#7fc08a" stroke="#5a3fa8" stroke-width="1"/></svg>
<span class="row" style="left:79px;top:125px;letter-spacing:-0.101px">getPlacedState(World, BlockPosition, EnumDirection, float, float, float, int, EntityLiving) <span class="ret">: IBlockData</span></span>
<svg style="left:55px;top:148px" width="10" height="10" viewBox="0 0 10 10"><path d="M5 0.7L9.3 5L5 9.3L0.7 5Z" fill="#f6d56a" stroke="#c69a22" stroke-width="1"/></svg>
<svg style="left:52px;top:152px" width="7" height="8" viewBox="0 0 7 8"><rect x="0" y="0" width="7" height="8" fill="#e0364c"/><path d="M1.8 2.3L5.2 5.9M5.2 2.3L1.8 5.9" stroke="#fff" stroke-width="1.3" fill="none"/></svg>
<svg style="left:67px;top:153px" width="8" height="5" viewBox="0 0 8 5"><path d="M0.6 4.3L3.6 0.8L6.6 4.3Z" fill="#7fc08a" stroke="#5a3fa8" stroke-width="1"/></svg>
<span class="row" style="left:79px;top:143px;letter-spacing:-0.226px">getStateList() <span class="ret">: BlockStateList</span></span>
<svg style="left:57px;top:168px" width="8" height="8" viewBox="0 0 8 8"><rect x="0.5" y="0.5" width="6" height="6" fill="#f0707e" stroke="#d23a50" stroke-width="1"/></svg>
<span class="row" style="left:79px;top:161px;letter-spacing:-0.03px">i(World, BlockPosition) <span class="ret">: boolean</span></span>
<svg style="left:55px;top:184px" width="10" height="10" viewBox="0 0 10 10"><circle cx="5" cy="5" r="3.6" fill="#4fa961" stroke="#2f8a45" stroke-width="0.9"/><circle cx="4.2" cy="4" r="1.5" fill="#9fd6a8"/></svg>
<svg style="left:52px;top:188px" width="7" height="8" viewBox="0 0 7 8"><rect x="0" y="0" width="7" height="8" fill="#e0364c"/><path d="M1.8 2.3L5.2 5.9M5.2 2.3L1.8 5.9" stroke="#fff" stroke-width="1.3" fill="none"/></svg>
<svg style="left:67px;top:189px" width="8" height="5" viewBox="0 0 8 5"><path d="M0.6 4.3L3.6 0.8L6.6 4.3Z" fill="#7fc08a" stroke="#5a3fa8" stroke-width="1"/></svg>
<span class="row" style="left:79px;top:179px;letter-spacing:-0.072px">interact(World, BlockPosition, IBlockData, EntityHuman, EnumHand, EnumDirection, float, float, float) <span class="ret">: boolean</span></span>
<svg style="left:55px;top:202px" width="10" height="10" viewBox="0 0 10 10"><circle cx="5" cy="5" r="3.6" fill="#4fa961" stroke="#2f8a45" stroke-width="0.9"/><circle cx="4.2" cy="4" r="1.5" fill="#9fd6a8"/></svg>
<svg style="left:67px;top:207px" width="8" height="5" viewBox="0 0 8 5"><path d="M0.6 4.3L3.6 0.8L6.6 4.3Z" fill="#7fc08a" stroke="#5a3fa8" stroke-width="1"/></svg>
<span class="row" style="left:79px;top:197px;letter-spacing:-0.175px">isComplexRedstone(IBlockData) <span class="ret">: boolean</span></span>
<svg style="left:55px;top:220px" width="10" height="10" viewBox="0 0 10 10"><circle cx="5" cy="5" r="3.6" fill="#4fa961" stroke="#2f8a45" stroke-width="0.9"/><circle cx="4.2" cy="4" r="1.5" fill="#9fd6a8"/></svg>
<svg style="left:52px;top:224px" width="7" height="8" viewBox="0 0 7 8"><rect x="0" y="0" width="7" height="8" fill="#e0364c"/><path d="M1.8 2.3L5.2 5.9M5.2 2.3L1.8 5.9" stroke="#fff" stroke-width="1.3" fill="none"/></svg>
<svg style="left:67px;top:225px" width="8" height="5" viewBox="0 0 8 5"><path d="M0.6 4.3L3.6 0.8L6.6 4.3Z" fill="#7fc08a" stroke="#5a3fa8" stroke-width="1"/></svg>
<span class="row" style="left:79px;top:215px;letter-spacing:-0.207px">isPowerSource(IBlockData) <span class="ret">: boolean</span></span>
<svg style="left:57px;top:240px" width="8" height="8" viewBox="0 0 8 8"><rect x="0.5" y="0.5" width="6" height="6" fill="#f0707e" stroke="#d23a50" stroke-width="1"/></svg>
<span class="row" style="left:79px;top:233px;letter-spacing:-0.03px">j(World, BlockPosition) <span class="ret">: boolean</span></span>
<svg style="left:55px;top:256px" width="10" height="10" viewBox="0 0 10 10"><circle cx="5" cy="5" r="3.6" fill="#4fa961" stroke="#2f8a45" stroke-width="0.9"/><circle cx="4.2" cy="4" r="1.5" fill="#9fd6a8"/></svg>
<svg style="left:52px;top:260px" width="7" height="8" viewBox="0 0 7 8"><rect x="0" y="0" width="7" height="8" fill="#e0364c"/><path d="M1.8 2.3L5.2 5.9M5.2 2.3L1.8 5.9" stroke="#fff" stroke-width="1.3" fill="none"/></svg>
<svg style="left:67px;top:261px" width="8" height="5" viewBox="0 0 8 5"><path d="M0.6 4.3L3.6 0.8L6.6 4.3Z" fill="#7fc08a" stroke="#5a3fa8" stroke-width="1"/></svg>
<span class="row" style="left:79px;top:251px;letter-spacing:-0.102px">onPlace(World, BlockPosition, IBlockData) <span class="ret">: void</span></span>
<svg style="left:55px;top:274px" width="10" height="10" viewBox="0 0 10 10"><circle cx="5" cy="5" r="3.6" fill="#4fa961" stroke="#2f8a45" stroke-width="0.9"/><circle cx="4.2" cy="4" r="1.5" fill="#9fd6a8"/></svg>
<svg style="left:52px;top:278px" width="7" height="8" viewBox="0 0 7 8"><rect x="0" y="0" width="7" height="8" fill="#e0364c"/><path d="M1.8 2.3L5.2 5.9M5.2 2.3L1.8 5.9" stroke="#fff" stroke-width="1.3" fill="none"/></svg>
<svg style="left:67px;top:279px" width="8" height="5" viewBox="0 0 8 5"><path d="M0.6 4.3L3.6 0.8L6.6 4.3Z" fill="#7fc08a" stroke="#5a3fa8" stroke-width="1"/></svg>
<span class="row" style="left:79px;top:269px;letter-spacing:-0.126px">postPlace(World, BlockPosition, IBlockData, EntityLiving, ItemStack) <span class="ret">: void</span></span>
<svg style="left:55px;top:292px" width="10" height="10" viewBox="0 0 10 10"><circle cx="5" cy="5" r="3.6" fill="#4fa961" stroke="#2f8a45" stroke-width="0.9"/><circle cx="4.2" cy="4" r="1.5" fill="#9fd6a8"/></svg>
<svg style="left:67px;top:297px" width="8" height="5" viewBox="0 0 8 5"><path d="M0.6 4.3L3.6 0.8L6.6 4.3Z" fill="#7fc08a" stroke="#5a3fa8" stroke-width="1"/></svg>
<span class="row" style="left:79px;top:287px;letter-spacing:-0.054px">remove(World, BlockPosition, IBlockData) <span class="ret">: void</span></span>
</div>
<div class="sb" style="left:1899px;top:700px;width:17px;height:295px"></div><div class="thumb" style="left:1900px;top:843px;width:15px;height:119px"></div><svg style="left:1903px;top:706px" width="9" height="6" viewBox="0 0 9 6"><path d="M0.8 5.2L4.5 1.4L8.2 5.2" fill="none" stroke="#4d4d4d" stroke-width="2"/></svg><svg style="left:1903px;top:984px" width="9" height="6" viewBox="0 0 9 6"><path d="M0.8 0.8L4.5 4.6L8.2 0.8" fill="none" stroke="#4d4d4d" stroke-width="2"/></svg>
<div class="sb" style="left:1495px;top:995px;width:404px;height:15px"></div><div class="thumb" style="left:1512px;top:996px;width:223px;height:13px"></div><svg style="left:1501px;top:998px" width="6" height="9" viewBox="0 0 6 9"><path d="M5.2 0.8L1.4 4.5L5.2 8.2" fill="none" stroke="#4d4d4d" stroke-width="2"/></svg><svg style="left:1887px;top:998px" width="6" height="9" viewBox="0 0 6 9"><path d="M0.8 0.8L4.6 4.5L0.8 8.2" fill="none" stroke="#4d4d4d" stroke-width="2"/></svg>
<div class="abs" style="left:1337px;top:1014px;width:1px;height:22px;background:#a0a0a0;box-shadow:1px 0 0 #fff"></div>
<div class="abs" style="left:1441px;top:1014px;width:1px;height:22px;background:#a0a0a0;box-shadow:1px 0 0 #fff"></div>
<div class="abs" style="left:1539px;top:1014px;width:1px;height:22px;background:#a0a0a0;box-shadow:1px 0 0 #fff"></div>
<span class="t " style="left:1345px;top:1017px;letter-spacing:-0.024px;">Writable</span>
<span class="t " style="left:1449px;top:1017px;letter-spacing:-0.229px;">Smart Insert</span>
<span class="t " style="left:1547px;top:1017px;letter-spacing:-0.621px;">233 : 21</span>
<svg style="left:1635px;top:1017px" width="3" height="16" viewBox="0 0 3 16"><rect x="0" y="0" width="2" height="2" fill="#a29c8c"/><rect x="0.5" y="1.5" width="2" height="1" fill="#e9e6dc" opacity=".6"/><rect x="0" y="4.6" width="2" height="2" fill="#a29c8c"/><rect x="0.5" y="6.1" width="2" height="1" fill="#e9e6dc" opacity=".6"/><rect x="0" y="9.2" width="2" height="2" fill="#a29c8c"/><rect x="0.5" y="10.7" width="2" height="1" fill="#e9e6dc" opacity=".6"/><rect x="0" y="13.8" width="2" height="2" fill="#a29c8c"/><rect x="0.5" y="15.3" width="2" height="1" fill="#e9e6dc" opacity=".6"/></svg>
<div id="taskbar"></div>
<div class="abs" style="left:1915px;top:1040px;width:1px;height:40px;background:#5a5a5a"></div>
<div class="abs" style="left:392px;top:1040px;width:48px;height:40px;background:#343538"></div>
<div class="abs" style="left:200px;top:1078px;width:40px;height:2px;background:#76b9ed"></div>
<div class="abs" style="left:298px;top:1078px;width:34px;height:2px;background:#76b9ed"></div>
<div class="abs" style="left:347px;top:1078px;width:40px;height:2px;background:#76b9ed"></div>
<div class="abs" style="left:392px;top:1078px;width:48px;height:2px;background:#76b9ed"></div>
<div class="abs" style="left:333px;top:1078px;width:5px;height:2px;background:#5a93c4"></div>
<svg style="left:16px;top:1052px" width="16" height="16" viewBox="0 0 16 16"><path d="M0 2.3L6.6 1.4V7.6H0ZM7.4 1.3L16 0V7.6H7.4ZM0 8.4H6.6V14.6L0 13.7ZM7.4 8.4H16V16L7.4 14.7Z" fill="#fff"/></svg>
<svg style="left:63px;top:1051px" width="18" height="18" viewBox="0 0 18 18"><circle cx="10.5" cy="6.5" r="5" fill="none" stroke="#fff" stroke-width="1.5"/><path d="M7 10.5L1 16.8" stroke="#fff" stroke-width="1.7"/></svg>
<svg style="left:109px;top:1052px" width="22" height="16" viewBox="0 0 22 16"><rect x="4.5" y="1.5" width="13" height="13" fill="none" stroke="#fff" stroke-width="1.4"/><path d="M2 3.5H0.7V12.5H2M20 3.5H21.3V12.5H20" fill="none" stroke="#fff" stroke-width="1.3"/></svg>
<svg style="left:159px;top:1050px" width="22" height="19" viewBox="0 0 22 19"><path d="M1 2.2Q1 1.2 2 1.2H7.2L8.8 2.8H20Q21 2.8 21 3.8V6H1Z" fill="#f3c85a"/><rect x="1" y="4.6" width="20" height="13" rx="0.8" fill="#fbe6a2"/><path d="M4.5 18V10.6H17.5V18H14V13.6H8V18Z" fill="#38a2e6"/><rect x="2.2" y="2.2" width="3" height="0.9" fill="#fff" opacity=".7"/></svg>
<svg style="left:208px;top:1049px" width="22" height="22" viewBox="0 0 22 22"><circle cx="11" cy="11" r="10.5" fill="#e33b2e"/><path d="M11 11L1.9 5.7A10.5 10.5 0 0 0 6.2 20.3Z" fill="#2aa64c"/><path d="M11 11L6.2 20.3A10.5 10.5 0 0 0 21.4 9.5H11Z" fill="#fbc116"/><path d="M11 11L20.1 5.7A10.5 10.5 0 0 0 1.9 5.7L6.5 8.5Z" fill="#e33b2e"/><circle cx="11" cy="11" r="5" fill="#fff"/><circle cx="11" cy="11" r="4" fill="#3f82e8"/></svg>
<svg style="left:256px;top:1048px" width="25" height="25" viewBox="0 0 14.2 14"><defs><linearGradient id="eg" x1="0" y1="0" x2="0" y2="1"><stop offset="0" stop-color="#4a3f86"/><stop offset="1" stop-color="#231c4d"/></linearGradient></defs><circle cx="6.7" cy="7" r="6.2" fill="#f19a22"/><circle cx="8.1" cy="7" r="6.1" fill="url(#eg)"/><rect x="2.6" y="4.6" width="11.4" height="1" fill="#e8e6f4"/><rect x="2.2" y="6.5" width="11.8" height="1" fill="#e8e6f4"/><rect x="2.6" y="8.4" width="11.4" height="1" fill="#e8e6f4"/></svg>
<svg style="left:403px;top:1048px" width="25" height="25" viewBox="0 0 14.2 14"><defs><linearGradient id="eg" x1="0" y1="0" x2="0" y2="1"><stop offset="0" stop-color="#4a3f86"/><stop offset="1" stop-color="#231c4d"/></linearGradient></defs><circle cx="6.7" cy="7" r="6.2" fill="#f19a22"/><circle cx="8.1" cy="7" r="6.1" fill="url(#eg)"/><rect x="2.6" y="4.6" width="11.4" height="1" fill="#e8e6f4"/><rect x="2.2" y="6.5" width="11.8" height="1" fill="#e8e6f4"/><rect x="2.6" y="8.4" width="11.4" height="1" fill="#e8e6f4"/></svg>
<svg style="left:306px;top:1048px" width="24" height="24" viewBox="0 0 24 24"><path d="M12.00 1.00L13.83 1.92L12.00 2.83L10.17 1.92Z" fill="#4f9a30" stroke="#4f9a30" stroke-width=".25"/><path d="M10.17 1.92L12.00 2.83L10.17 3.75L8.33 2.83Z" fill="#6dbb45" stroke="#6dbb45" stroke-width=".25"/><path d="M8.33 2.83L10.17 3.75L8.33 4.67L6.50 3.75Z" fill="#66b03e" stroke="#66b03e" stroke-width=".25"/><path d="M6.50 3.75L8.33 4.67L6.50 5.58L4.67 4.67Z" fill="#5fa83a" stroke="#5fa83a" stroke-width=".25"/><path d="M4.67 4.67L6.50 5.58L4.67 6.50L2.83 5.58Z" fill="#5fa83a" stroke="#5fa83a" stroke-width=".25"/><path d="M2.83 5.58L4.67 6.50L2.83 7.42L1.00 6.50Z" fill="#58a236" stroke="#58a236" stroke-width=".25"/><path d="M13.83 1.92L15.67 2.83L13.83 3.75L12.00 2.83Z" fill="#5fa83a" stroke="#5fa83a" stroke-width=".25"/><path d="M12.00 2.83L13.83 3.75L12.00 4.67L10.17 3.75Z" fill="#4f9a30" stroke="#4f9a30" stroke-width=".25"/><path d="M10.17 3.75L12.00 4.67L10.17 5.58L8.33 4.67Z" fill="#58a236" stroke="#58a236" stroke-width=".25"/><path d="M8.33 4.67L10.17 5.58L8.33 6.50L6.50 5.58Z" fill="#5fa83a" stroke="#5fa83a" stroke-width=".25"/><path d="M6.50 5.58L8.33 6.50L6.50 7.42L4.67 6.50Z" fill="#58a236" stroke="#58a236" stroke-width=".25"/><path d="M4.67 6.50L6.50 7.42L4.67 8.33L2.83 7.42Z" fill="#6dbb45" stroke="#6dbb45" stroke-width=".25"/><path d="M15.67 2.83L17.50 3.75L15.67 4.67L13.83 3.75Z" fill="#5fa83a" stroke="#5fa83a" stroke-width=".25"/><path d="M13.83 3.75L15.67 4.67L13.83 5.58L12.00 4.67Z" fill="#5fa83a" stroke="#5fa83a" stroke-width=".25"/><path d="M12.00 4.67L13.83 5.58L12.00 6.50L10.17 5.58Z" fill="#66b03e" stroke="#66b03e" stroke-width=".25"/><path d="M10.17 5.58L12.00 6.50L10.17 7.42L8.33 6.50Z" fill="#66b03e" stroke="#66b03e" stroke-width=".25"/><path d="M8.33 6.50L10.17 7.42L8.33 8.33L6.50 7.42Z" fill="#5fa83a" stroke="#5fa83a" stroke-width=".25"/><path d="M6.50 7.42L8.33 8.33L6.50 9.25L4.67 8.33Z" fill="#6dbb45" stroke="#6dbb45" stroke-width=".25"/><path d="M17.50 3.75L19.33 4.67L17.50 5.58L15.67 4.67Z" fill="#5fa83a" stroke="#5fa83a" stroke-width=".25"/><path d="M15.67 4.67L17.50 5.58L15.67 6.50L13.83 5.58Z" fill="#58a236" stroke="#58a236" stroke-width=".25"/><path d="M13.83 5.58L15.67 6.50L13.83 7.42L12.00 6.50Z" fill="#66b03e" stroke="#66b03e" stroke-width=".25"/><path d="M12.00 6.50L13.83 7.42L12.00 8.33L10.17 7.42Z" fill="#5fa83a" stroke="#5fa83a" stroke-width=".25"/><path d="M10.17 7.42L12.00 8.33L10.17 9.25L8.33 8.33Z" fill="#58a236" stroke="#58a236" stroke-width=".25"/><path d="M8.33 8.33L10.17 9.25L8.33 10.17L6.50 9.25Z" fill="#5fa83a" stroke="#5fa83a" stroke-width=".25"/><path d="M19.33 4.67L21.17 5.58L19.33 6.50L17.50 5.58Z" fill="#6dbb45" stroke="#6dbb45" stroke-width=".25"/><path d="M17.50 5.58L19.33 6.50L17.50 7.42L15.67 6.50Z" fill="#58a236" stroke="#58a236" stroke-width=".25"/><path d="M15.67 6.50L17.50 7.42L15.67 8.33L13.83 7.42Z" fill="#5fa83a" stroke="#5fa83a" stroke-width=".25"/><path d="M13.83 7.42L15.67 8.33L13.83 9.25L12.00 8.33Z" fill="#58a236" stroke="#58a236" stroke-width=".25"/><path d="M12.00 8.33L13.83 9.25L12.00 10.17L10.17 9.25Z" fill="#58a236" stroke="#58a236" stroke-width=".25"/><path d="M10.17 9.25L12.00 10.17L10.17 11.08L8.33 10.17Z" fill="#66b03e" stroke="#66b03e" stroke-width=".25"/><path d="M21.17 5.58L23.00 6.50L21.17 7.42L19.33 6.50Z" fill="#5fa83a" stroke="#5fa83a" stroke-width=".25"/><path d="M19.33 6.50L21.17 7.42L19.33 8.33L17.50 7.42Z" fill="#6dbb45" stroke="#6dbb45" stroke-width=".25"/><path d="M17.50 7.42L19.33 8.33L17.50 9.25L15.67 8.33Z" fill="#5fa83a" stroke="#5fa83a" stroke-width=".25"/><path d="M15.67 8.33L17.50 9.25L15.67 10.17L13.83 9.25Z" fill="#58a236" stroke="#58a236" stroke-width=".25"/><path d="M13.83 9.25L15.67 10.17L13.83 11.08L12.00 10.17Z" fill="#6dbb45" stroke="#6dbb45" stroke-width=".25"/><path d="M12.00 10.17L13.83 11.08L12.00 12.00L10.17 11.08Z" fill="#4f9a30" stroke="#4f9a30" stroke-width=".25"/><path d="M1.00 6.50L2.83 7.42L2.83 9.33L1.00 8.42Z" fill="#5aa038" stroke="#5aa038" stroke-width=".25"/><path d="M1.00 8.42L2.83 9.33L2.83 11.25L1.00 10.33Z" fill="#4e8f2f" stroke="#4e8f2f" stroke-width=".25"/><path d="M1.00 10.33L2.83 11.25L2.83 13.17L1.00 12.25Z" fill="#85593a" stroke="#85593a" stroke-width=".25"/><path d="M1.00 12.25L2.83 13.17L2.83 15.08L1.00 14.17Z" fill="#96694a" stroke="#96694a" stroke-width=".25"/><path d="M1.00 14.17L2.83 15.08L2.83 17.00L1.00 16.08Z" fill="#85593a" stroke="#85593a" stroke-width=".25"/><path d="M1.00 16.08L2.83 17.00L2.83 18.92L1.00 18.00Z" fill="#7a5234" stroke="#7a5234" stroke-width=".25"/><path d="M2.83 7.42L4.67 8.33L4.67 10.25L2.83 9.33Z" fill="#4e8f2f" stroke="#4e8f2f" stroke-width=".25"/><path d="M2.83 9.33L4.67 10.25L4.67 12.17L2.83 11.25Z" fill="#7a5234" stroke="#7a5234" stroke-width=".25"/><path d="M2.83 11.25L4.67 12.17L4.67 14.08L2.83 13.17Z" fill="#96694a" stroke="#96694a" stroke-width=".25"/><path d="M2.83 13.17L4.67 14.08L4.67 16.00L2.83 15.08Z" fill="#8a6040" stroke="#8a6040" stroke-width=".25"/><path d="M2.83 15.08L4.67 16.00L4.67 17.92L2.83 17.00Z" fill="#85593a" stroke="#85593a" stroke-width=".25"/><path d="M2.83 17.00L4.67 17.92L4.67 19.83L2.83 18.92Z" fill="#8a6040" stroke="#8a6040" stroke-width=".25"/><path d="M4.67 8.33L6.50 9.25L6.50 11.17L4.67 10.25Z" fill="#468528" stroke="#468528" stroke-width=".25"/><path d="M4.67 10.25L6.50 11.17L6.50 13.08L4.67 12.17Z" fill="#4e8f2f" stroke="#4e8f2f" stroke-width=".25"/><path d="M4.67 12.17L6.50 13.08L6.50 15.00L4.67 14.08Z" fill="#6e4a2e" stroke="#6e4a2e" stroke-width=".25"/><path d="M4.67 14.08L6.50 15.00L6.50 16.92L4.67 16.00Z" fill="#85593a" stroke="#85593a" stroke-width=".25"/><path d="M4.67 16.00L6.50 16.92L6.50 18.83L4.67 17.92Z" fill="#6e4a2e" stroke="#6e4a2e" stroke-width=".25"/><path d="M4.67 17.92L6.50 18.83L6.50 20.75L4.67 19.83Z" fill="#96694a" stroke="#96694a" stroke-width=".25"/><path d="M6.50 9.25L8.33 10.17L8.33 12.08L6.50 11.17Z" fill="#5aa038" stroke="#5aa038" stroke-width=".25"/><path d="M6.50 11.17L8.33 12.08L8.33 14.00L6.50 13.08Z" fill="#6e4a2e" stroke="#6e4a2e" stroke-width=".25"/><path d="M6.50 13.08L8.33 14.00L8.33 15.92L6.50 15.00Z" fill="#96694a" stroke="#96694a" stroke-width=".25"/><path d="M6.50 15.00L8.33 15.92L8.33 17.83L6.50 16.92Z" fill="#96694a" stroke="#96694a" stroke-width=".25"/><path d="M6.50 16.92L8.33 17.83L8.33 19.75L6.50 18.83Z" fill="#7a5234" stroke="#7a5234" stroke-width=".25"/><path d="M6.50 18.83L8.33 19.75L8.33 21.67L6.50 20.75Z" fill="#7a5234" stroke="#7a5234" stroke-width=".25"/><path d="M8.33 10.17L10.17 11.08L10.17 13.00L8.33 12.08Z" fill="#468528" stroke="#468528" stroke-width=".25"/><path d="M8.33 12.08L10.17 13.00L10.17 14.92L8.33 14.00Z" fill="#8a6040" stroke="#8a6040" stroke-width=".25"/><path d="M8.33 14.00L10.17 14.92L10.17 16.83L8.33 15.92Z" fill="#85593a" stroke="#85593a" stroke-width=".25"/><path d="M8.33 15.92L10.17 16.83L10.17 18.75L8.33 17.83Z" fill="#96694a" stroke="#96694a" stroke-width=".25"/><path d="M8.33 17.83L10.17 18.75L10.17 20.67L8.33 19.75Z" fill="#85593a" stroke="#85593a" stroke-width=".25"/><path d="M8.33 19.75L10.17 20.67L10.17 22.58L8.33 21.67Z" fill="#6e4a2e" stroke="#6e4a2e" stroke-width=".25"/><path d="M10.17 11.08L12.00 12.00L12.00 13.92L10.17 13.00Z" fill="#5aa038" stroke="#5aa038" stroke-width=".25"/><path d="M10.17 13.00L12.00 13.92L12.00 15.83L10.17 14.92Z" fill="#96694a" stroke="#96694a" stroke-width=".25"/><path d="M10.17 14.92L12.00 15.83L12.00 17.75L10.17 16.83Z" fill="#85593a" stroke="#85593a" stroke-width=".25"/><path d="M10.17 16.83L12.00 17.75L12.00 19.67L10.17 18.75Z" fill="#8a6040" stroke="#8a6040" stroke-width=".25"/><path d="M10.17 18.75L12.00 19.67L12.00 21.58L10.17 20.67Z" fill="#8a6040" stroke="#8a6040" stroke-width=".25"/><path d="M10.17 20.67L12.00 21.58L12.00 23.50L10.17 22.58Z" fill="#85593a" stroke="#85593a" stroke-width=".25"/><path d="M12.00 12.00L13.83 11.08L13.83 13.00L12.00 13.92Z" fill="#4a8a2e" stroke="#4a8a2e" stroke-width=".25"/><path d="M12.00 13.92L13.83 13.00L13.83 14.92L12.00 15.83Z" fill="#4a8a2e" stroke="#4a8a2e" stroke-width=".25"/><path d="M12.00 15.83L13.83 14.92L13.83 16.83L12.00 17.75Z" fill="#5c3e28" stroke="#5c3e28" stroke-width=".25"/><path d="M12.00 17.75L13.83 16.83L13.83 18.75L12.00 19.67Z" fill="#523622" stroke="#523622" stroke-width=".25"/><path d="M12.00 19.67L13.83 18.75L13.83 20.67L12.00 21.58Z" fill="#523622" stroke="#523622" stroke-width=".25"/><path d="M12.00 21.58L13.83 20.67L13.83 22.58L12.00 23.50Z" fill="#6a4830" stroke="#6a4830" stroke-width=".25"/><path d="M13.83 11.08L15.67 10.17L15.67 12.08L13.83 13.00Z" fill="#387020" stroke="#387020" stroke-width=".25"/><path d="M13.83 13.00L15.67 12.08L15.67 14.00L13.83 14.92Z" fill="#387020" stroke="#387020" stroke-width=".25"/><path d="M13.83 14.92L15.67 14.00L15.67 15.92L13.83 16.83Z" fill="#664630" stroke="#664630" stroke-width=".25"/><path d="M13.83 16.83L15.67 15.92L15.67 17.83L13.83 18.75Z" fill="#74503a" stroke="#74503a" stroke-width=".25"/><path d="M13.83 18.75L15.67 17.83L15.67 19.75L13.83 20.67Z" fill="#74503a" stroke="#74503a" stroke-width=".25"/><path d="M13.83 20.67L15.67 19.75L15.67 21.67L13.83 22.58Z" fill="#74503a" stroke="#74503a" stroke-width=".25"/><path d="M15.67 10.17L17.50 9.25L17.50 11.17L15.67 12.08Z" fill="#387020" stroke="#387020" stroke-width=".25"/><path d="M15.67 12.08L17.50 11.17L17.50 13.08L15.67 14.00Z" fill="#523622" stroke="#523622" stroke-width=".25"/><path d="M15.67 14.00L17.50 13.08L17.50 15.00L15.67 15.92Z" fill="#6a4830" stroke="#6a4830" stroke-width=".25"/><path d="M15.67 15.92L17.50 15.00L17.50 16.92L15.67 17.83Z" fill="#6a4830" stroke="#6a4830" stroke-width=".25"/><path d="M15.67 17.83L17.50 16.92L17.50 18.83L15.67 19.75Z" fill="#74503a" stroke="#74503a" stroke-width=".25"/><path d="M15.67 19.75L17.50 18.83L17.50 20.75L15.67 21.67Z" fill="#523622" stroke="#523622" stroke-width=".25"/><path d="M17.50 9.25L19.33 8.33L19.33 10.25L17.50 11.17Z" fill="#387020" stroke="#387020" stroke-width=".25"/><path d="M17.50 11.17L19.33 10.25L19.33 12.17L17.50 13.08Z" fill="#6a4830" stroke="#6a4830" stroke-width=".25"/><path d="M17.50 13.08L19.33 12.17L19.33 14.08L17.50 15.00Z" fill="#74503a" stroke="#74503a" stroke-width=".25"/><path d="M17.50 15.00L19.33 14.08L19.33 16.00L17.50 16.92Z" fill="#664630" stroke="#664630" stroke-width=".25"/><path d="M17.50 16.92L19.33 16.00L19.33 17.92L17.50 18.83Z" fill="#523622" stroke="#523622" stroke-width=".25"/><path d="M17.50 18.83L19.33 17.92L19.33 19.83L17.50 20.75Z" fill="#74503a" stroke="#74503a" stroke-width=".25"/><path d="M19.33 8.33L21.17 7.42L21.17 9.33L19.33 10.25Z" fill="#387020" stroke="#387020" stroke-width=".25"/><path d="M19.33 10.25L21.17 9.33L21.17 11.25L19.33 12.17Z" fill="#387020" stroke="#387020" stroke-width=".25"/><path d="M19.33 12.17L21.17 11.25L21.17 13.17L19.33 14.08Z" fill="#74503a" stroke="#74503a" stroke-width=".25"/><path d="M19.33 14.08L21.17 13.17L21.17 15.08L19.33 16.00Z" fill="#6a4830" stroke="#6a4830" stroke-width=".25"/><path d="M19.33 16.00L21.17 15.08L21.17 17.00L19.33 17.92Z" fill="#523622" stroke="#523622" stroke-width=".25"/><path d="M19.33 17.92L21.17 17.00L21.17 18.92L19.33 19.83Z" fill="#74503a" stroke="#74503a" stroke-width=".25"/><path d="M21.17 7.42L23.00 6.50L23.00 8.42L21.17 9.33Z" fill="#3f7a26" stroke="#3f7a26" stroke-width=".25"/><path d="M21.17 9.33L23.00 8.42L23.00 10.33L21.17 11.25Z" fill="#523622" stroke="#523622" stroke-width=".25"/><path d="M21.17 11.25L23.00 10.33L23.00 12.25L21.17 13.17Z" fill="#6a4830" stroke="#6a4830" stroke-width=".25"/><path d="M21.17 13.17L23.00 12.25L23.00 14.17L21.17 15.08Z" fill="#5c3e28" stroke="#5c3e28" stroke-width=".25"/><path d="M21.17 15.08L23.00 14.17L23.00 16.08L21.17 17.00Z" fill="#74503a" stroke="#74503a" stroke-width=".25"/><path d="M21.17 17.00L23.00 16.08L23.00 18.00L21.17 18.92Z" fill="#5c3e28" stroke="#5c3e28" stroke-width=".25"/></svg>
<svg style="left:355px;top:1048px" width="24" height="24" viewBox="0 0 24 24"><path d="M12.00 1.00L13.83 1.92L12.00 2.83L10.17 1.92Z" fill="#d0a470" stroke="#d0a470" stroke-width=".25"/><path d="M10.17 1.92L12.00 2.83L10.17 3.75L8.33 2.83Z" fill="#b08250" stroke="#b08250" stroke-width=".25"/><path d="M8.33 2.83L10.17 3.75L8.33 4.67L6.50 3.75Z" fill="#d0a470" stroke="#d0a470" stroke-width=".25"/><path d="M6.50 3.75L8.33 4.67L6.50 5.58L4.67 4.67Z" fill="#d0a470" stroke="#d0a470" stroke-width=".25"/><path d="M4.67 4.67L6.50 5.58L4.67 6.50L2.83 5.58Z" fill="#b08250" stroke="#b08250" stroke-width=".25"/><path d="M2.83 5.58L4.67 6.50L2.83 7.42L1.00 6.50Z" fill="#b08250" stroke="#b08250" stroke-width=".25"/><path d="M13.83 1.92L15.67 2.83L13.83 3.75L12.00 2.83Z" fill="#c69862" stroke="#c69862" stroke-width=".25"/><path d="M12.00 2.83L13.83 3.75L12.00 4.67L10.17 3.75Z" fill="#c69862" stroke="#c69862" stroke-width=".25"/><path d="M10.17 3.75L12.00 4.67L10.17 5.58L8.33 4.67Z" fill="#b08250" stroke="#b08250" stroke-width=".25"/><path d="M8.33 4.67L10.17 5.58L8.33 6.50L6.50 5.58Z" fill="#d0a470" stroke="#d0a470" stroke-width=".25"/><path d="M6.50 5.58L8.33 6.50L6.50 7.42L4.67 6.50Z" fill="#b08250" stroke="#b08250" stroke-width=".25"/><path d="M4.67 6.50L6.50 7.42L4.67 8.33L2.83 7.42Z" fill="#c69862" stroke="#c69862" stroke-width=".25"/><path d="M15.67 2.83L17.50 3.75L15.67 4.67L13.83 3.75Z" fill="#b98a54" stroke="#b98a54" stroke-width=".25"/><path d="M13.83 3.75L15.67 4.67L13.83 5.58L12.00 4.67Z" fill="#d0a470" stroke="#d0a470" stroke-width=".25"/><path d="M12.00 4.67L13.83 5.58L12.00 6.50L10.17 5.58Z" fill="#a87a48" stroke="#a87a48" stroke-width=".25"/><path d="M10.17 5.58L12.00 6.50L10.17 7.42L8.33 6.50Z" fill="#c69862" stroke="#c69862" stroke-width=".25"/><path d="M8.33 6.50L10.17 7.42L8.33 8.33L6.50 7.42Z" fill="#b98a54" stroke="#b98a54" stroke-width=".25"/><path d="M6.50 7.42L8.33 8.33L6.50 9.25L4.67 8.33Z" fill="#b08250" stroke="#b08250" stroke-width=".25"/><path d="M17.50 3.75L19.33 4.67L17.50 5.58L15.67 4.67Z" fill="#b98a54" stroke="#b98a54" stroke-width=".25"/><path d="M15.67 4.67L17.50 5.58L15.67 6.50L13.83 5.58Z" fill="#b08250" stroke="#b08250" stroke-width=".25"/><path d="M13.83 5.58L15.67 6.50L13.83 7.42L12.00 6.50Z" fill="#d0a470" stroke="#d0a470" stroke-width=".25"/><path d="M12.00 6.50L13.83 7.42L12.00 8.33L10.17 7.42Z" fill="#d0a470" stroke="#d0a470" stroke-width=".25"/><path d="M10.17 7.42L12.00 8.33L10.17 9.25L8.33 8.33Z" fill="#b08250" stroke="#b08250" stroke-width=".25"/><path d="M8.33 8.33L10.17 9.25L8.33 10.17L6.50 9.25Z" fill="#c69862" stroke="#c69862" stroke-width=".25"/><path d="M19.33 4.67L21.17 5.58L19.33 6.50L17.50 5.58Z" fill="#b08250" stroke="#b08250" stroke-width=".25"/><path d="M17.50 5.58L19.33 6.50L17.50 7.42L15.67 6.50Z" fill="#b98a54" stroke="#b98a54" stroke-width=".25"/><path d="M15.67 6.50L17.50 7.42L15.67 8.33L13.83 7.42Z" fill="#b08250" stroke="#b08250" stroke-width=".25"/><path d="M13.83 7.42L15.67 8.33L13.83 9.25L12.00 8.33Z" fill="#b98a54" stroke="#b98a54" stroke-width=".25"/><path d="M12.00 8.33L13.83 9.25L12.00 10.17L10.17 9.25Z" fill="#b98a54" stroke="#b98a54" stroke-width=".25"/><path d="M10.17 9.25L12.00 10.17L10.17 11.08L8.33 10.17Z" fill="#b98a54" stroke="#b98a54" stroke-width=".25"/><path d="M21.17 5.58L23.00 6.50L21.17 7.42L19.33 6.50Z" fill="#c69862" stroke="#c69862" stroke-width=".25"/><path d="M19.33 6.50L21.17 7.42L19.33 8.33L17.50 7.42Z" fill="#c69862" stroke="#c69862" stroke-width=".25"/><path d="M17.50 7.42L19.33 8.33L17.50 9.25L15.67 8.33Z" fill="#b08250" stroke="#b08250" stroke-width=".25"/><path d="M15.67 8.33L17.50 9.25L15.67 10.17L13.83 9.25Z" fill="#b98a54" stroke="#b98a54" stroke-width=".25"/><path d="M13.83 9.25L15.67 10.17L13.83 11.08L12.00 10.17Z" fill="#d0a470" stroke="#d0a470" stroke-width=".25"/><path d="M12.00 10.17L13.83 11.08L12.00 12.00L10.17 11.08Z" fill="#a87a48" stroke="#a87a48" stroke-width=".25"/><path d="M1.00 6.50L2.83 7.42L2.83 9.33L1.00 8.42Z" fill="#4a3018" stroke="#4a3018" stroke-width=".25"/><path d="M1.00 8.42L2.83 9.33L2.83 11.25L1.00 10.33Z" fill="#7a5630" stroke="#7a5630" stroke-width=".25"/><path d="M1.00 10.33L2.83 11.25L2.83 13.17L1.00 12.25Z" fill="#6a4826" stroke="#6a4826" stroke-width=".25"/><path d="M1.00 12.25L2.83 13.17L2.83 15.08L1.00 14.17Z" fill="#7a5630" stroke="#7a5630" stroke-width=".25"/><path d="M1.00 14.17L2.83 15.08L2.83 17.00L1.00 16.08Z" fill="#6a4826" stroke="#6a4826" stroke-width=".25"/><path d="M1.00 16.08L2.83 17.00L2.83 18.92L1.00 18.00Z" fill="#c8a878" stroke="#c8a878" stroke-width=".25"/><path d="M2.83 7.42L4.67 8.33L4.67 10.25L2.83 9.33Z" fill="#9a7246" stroke="#9a7246" stroke-width=".25"/><path d="M2.83 9.33L4.67 10.25L4.67 12.17L2.83 11.25Z" fill="#4a3018" stroke="#4a3018" stroke-width=".25"/><path d="M2.83 11.25L4.67 12.17L4.67 14.08L2.83 13.17Z" fill="#8a6238" stroke="#8a6238" stroke-width=".25"/><path d="M2.83 13.17L4.67 14.08L4.67 16.00L2.83 15.08Z" fill="#c8a878" stroke="#c8a878" stroke-width=".25"/><path d="M2.83 15.08L4.67 16.00L4.67 17.92L2.83 17.00Z" fill="#8a6238" stroke="#8a6238" stroke-width=".25"/><path d="M2.83 17.00L4.67 17.92L4.67 19.83L2.83 18.92Z" fill="#4a3018" stroke="#4a3018" stroke-width=".25"/><path d="M4.67 8.33L6.50 9.25L6.50 11.17L4.67 10.25Z" fill="#c8a878" stroke="#c8a878" stroke-width=".25"/><path d="M4.67 10.25L6.50 11.17L6.50 13.08L4.67 12.17Z" fill="#9a7246" stroke="#9a7246" stroke-width=".25"/><path d="M4.67 12.17L6.50 13.08L6.50 15.00L4.67 14.08Z" fill="#4a3018" stroke="#4a3018" stroke-width=".25"/><path d="M4.67 14.08L6.50 15.00L6.50 16.92L4.67 16.00Z" fill="#7a5630" stroke="#7a5630" stroke-width=".25"/><path d="M4.67 16.00L6.50 16.92L6.50 18.83L4.67 17.92Z" fill="#8a6238" stroke="#8a6238" stroke-width=".25"/><path d="M4.67 17.92L6.50 18.83L6.50 20.75L4.67 19.83Z" fill="#c8a878" stroke="#c8a878" stroke-width=".25"/><path d="M6.50 9.25L8.33 10.17L8.33 12.08L6.50 11.17Z" fill="#9a7246" stroke="#9a7246" stroke-width=".25"/><path d="M6.50 11.17L8.33 12.08L8.33 14.00L6.50 13.08Z" fill="#9a7246" stroke="#9a7246" stroke-width=".25"/><path d="M6.50 13.08L8.33 14.00L8.33 15.92L6.50 15.00Z" fill="#6a4826" stroke="#6a4826" stroke-width=".25"/><path d="M6.50 15.00L8.33 15.92L8.33 17.83L6.50 16.92Z" fill="#7a5630" stroke="#7a5630" stroke-width=".25"/><path d="M6.50 16.92L8.33 17.83L8.33 19.75L6.50 18.83Z" fill="#9a7246" stroke="#9a7246" stroke-width=".25"/><path d="M6.50 18.83L8.33 19.75L8.33 21.67L6.50 20.75Z" fill="#8a6238" stroke="#8a6238" stroke-width=".25"/><path d="M8.33 10.17L10.17 11.08L10.17 13.00L8.33 12.08Z" fill="#8a6238" stroke="#8a6238" stroke-width=".25"/><path d="M8.33 12.08L10.17 13.00L10.17 14.92L8.33 14.00Z" fill="#7a5630" stroke="#7a5630" stroke-width=".25"/><path d="M8.33 14.00L10.17 14.92L10.17 16.83L8.33 15.92Z" fill="#8a6238" stroke="#8a6238" stroke-width=".25"/><path d="M8.33 15.92L10.17 16.83L10.17 18.75L8.33 17.83Z" fill="#4a3018" stroke="#4a3018" stroke-width=".25"/><path d="M8.33 17.83L10.17 18.75L10.17 20.67L8.33 19.75Z" fill="#8a6238" stroke="#8a6238" stroke-width=".25"/><path d="M8.33 19.75L10.17 20.67L10.17 22.58L8.33 21.67Z" fill="#9a7246" stroke="#9a7246" stroke-width=".25"/><path d="M10.17 11.08L12.00 12.00L12.00 13.92L10.17 13.00Z" fill="#4a3018" stroke="#4a3018" stroke-width=".25"/><path d="M10.17 13.00L12.00 13.92L12.00 15.83L10.17 14.92Z" fill="#8a6238" stroke="#8a6238" stroke-width=".25"/><path d="M10.17 14.92L12.00 15.83L12.00 17.75L10.17 16.83Z" fill="#8a6238" stroke="#8a6238" stroke-width=".25"/><path d="M10.17 16.83L12.00 17.75L12.00 19.67L10.17 18.75Z" fill="#c8a878" stroke="#c8a878" stroke-width=".25"/><path d="M10.17 18.75L12.00 19.67L12.00 21.58L10.17 20.67Z" fill="#8a6238" stroke="#8a6238" stroke-width=".25"/><path d="M10.17 20.67L12.00 21.58L12.00 23.50L10.17 22.58Z" fill="#6a4826" stroke="#6a4826" stroke-width=".25"/><path d="M12.00 12.00L13.83 11.08L13.83 13.00L12.00 13.92Z" fill="#4e341a" stroke="#4e341a" stroke-width=".25"/><path d="M12.00 13.92L13.83 13.00L13.83 14.92L12.00 15.83Z" fill="#6a4a28" stroke="#6a4a28" stroke-width=".25"/><path d="M12.00 15.83L13.83 14.92L13.83 16.83L12.00 17.75Z" fill="#3b2612" stroke="#3b2612" stroke-width=".25"/><path d="M12.00 17.75L13.83 16.83L13.83 18.75L12.00 19.67Z" fill="#3b2612" stroke="#3b2612" stroke-width=".25"/><path d="M12.00 19.67L13.83 18.75L13.83 20.67L12.00 21.58Z" fill="#a88a5c" stroke="#a88a5c" stroke-width=".25"/><path d="M12.00 21.58L13.83 20.67L13.83 22.58L12.00 23.50Z" fill="#3b2612" stroke="#3b2612" stroke-width=".25"/><path d="M13.83 11.08L15.67 10.17L15.67 12.08L13.83 13.00Z" fill="#3b2612" stroke="#3b2612" stroke-width=".25"/><path d="M13.83 13.00L15.67 12.08L15.67 14.00L13.83 14.92Z" fill="#6a4a28" stroke="#6a4a28" stroke-width=".25"/><path d="M13.83 14.92L15.67 14.00L15.67 15.92L13.83 16.83Z" fill="#5e4222" stroke="#5e4222" stroke-width=".25"/><path d="M13.83 16.83L15.67 15.92L15.67 17.83L13.83 18.75Z" fill="#a88a5c" stroke="#a88a5c" stroke-width=".25"/><path d="M13.83 18.75L15.67 17.83L15.67 19.75L13.83 20.67Z" fill="#4e341a" stroke="#4e341a" stroke-width=".25"/><path d="M13.83 20.67L15.67 19.75L15.67 21.67L13.83 22.58Z" fill="#a88a5c" stroke="#a88a5c" stroke-width=".25"/><path d="M15.67 10.17L17.50 9.25L17.50 11.17L15.67 12.08Z" fill="#785632" stroke="#785632" stroke-width=".25"/><path d="M15.67 12.08L17.50 11.17L17.50 13.08L15.67 14.00Z" fill="#785632" stroke="#785632" stroke-width=".25"/><path d="M15.67 14.00L17.50 13.08L17.50 15.00L15.67 15.92Z" fill="#6a4a28" stroke="#6a4a28" stroke-width=".25"/><path d="M15.67 15.92L17.50 15.00L17.50 16.92L15.67 17.83Z" fill="#785632" stroke="#785632" stroke-width=".25"/><path d="M15.67 17.83L17.50 16.92L17.50 18.83L15.67 19.75Z" fill="#785632" stroke="#785632" stroke-width=".25"/><path d="M15.67 19.75L17.50 18.83L17.50 20.75L15.67 21.67Z" fill="#6a4a28" stroke="#6a4a28" stroke-width=".25"/><path d="M17.50 9.25L19.33 8.33L19.33 10.25L17.50 11.17Z" fill="#3b2612" stroke="#3b2612" stroke-width=".25"/><path d="M17.50 11.17L19.33 10.25L19.33 12.17L17.50 13.08Z" fill="#6a4a28" stroke="#6a4a28" stroke-width=".25"/><path d="M17.50 13.08L19.33 12.17L19.33 14.08L17.50 15.00Z" fill="#4e341a" stroke="#4e341a" stroke-width=".25"/><path d="M17.50 15.00L19.33 14.08L19.33 16.00L17.50 16.92Z" fill="#4e341a" stroke="#4e341a" stroke-width=".25"/><path d="M17.50 16.92L19.33 16.00L19.33 17.92L17.50 18.83Z" fill="#a88a5c" stroke="#a88a5c" stroke-width=".25"/><path d="M17.50 18.83L19.33 17.92L19.33 19.83L17.50 20.75Z" fill="#6a4a28" stroke="#6a4a28" stroke-width=".25"/><path d="M19.33 8.33L21.17 7.42L21.17 9.33L19.33 10.25Z" fill="#6a4a28" stroke="#6a4a28" stroke-width=".25"/><path d="M19.33 10.25L21.17 9.33L21.17 11.25L19.33 12.17Z" fill="#6a4a28" stroke="#6a4a28" stroke-width=".25"/><path d="M19.33 12.17L21.17 11.25L21.17 13.17L19.33 14.08Z" fill="#3b2612" stroke="#3b2612" stroke-width=".25"/><path d="M19.33 14.08L21.17 13.17L21.17 15.08L19.33 16.00Z" fill="#3b2612" stroke="#3b2612" stroke-width=".25"/><path d="M19.33 16.00L21.17 15.08L21.17 17.00L19.33 17.92Z" fill="#4e341a" stroke="#4e341a" stroke-width=".25"/><path d="M19.33 17.92L21.17 17.00L21.17 18.92L19.33 19.83Z" fill="#a88a5c" stroke="#a88a5c" stroke-width=".25"/><path d="M21.17 7.42L23.00 6.50L23.00 8.42L21.17 9.33Z" fill="#5e4222" stroke="#5e4222" stroke-width=".25"/><path d="M21.17 9.33L23.00 8.42L23.00 10.33L21.17 11.25Z" fill="#4e341a" stroke="#4e341a" stroke-width=".25"/><path d="M21.17 11.25L23.00 10.33L23.00 12.25L21.17 13.17Z" fill="#3b2612" stroke="#3b2612" stroke-width=".25"/><path d="M21.17 13.17L23.00 12.25L23.00 14.17L21.17 15.08Z" fill="#5e4222" stroke="#5e4222" stroke-width=".25"/><path d="M21.17 15.08L23.00 14.17L23.00 16.08L21.17 17.00Z" fill="#4e341a" stroke="#4e341a" stroke-width=".25"/><path d="M21.17 17.00L23.00 16.08L23.00 18.00L21.17 18.92Z" fill="#a88a5c" stroke="#a88a5c" stroke-width=".25"/></svg>
<svg style="left:1734px;top:1056px" width="13" height="8" viewBox="0 0 13 8"><path d="M1 7L6.5 1.5L12 7" fill="none" stroke="#fff" stroke-width="1.3"/></svg>
<svg style="left:1756px;top:1051px" width="18" height="18" viewBox="0 0 18 18"><path d="M9 1Q10.5 1 10.5 3V7L16.5 10.5V12L10.5 10.3V14L12.5 15.5V16.8L9 15.8L5.5 16.8V15.5L7.5 14V10.3L1.5 12V10.5L7.5 7V3Q7.5 1 9 1Z" fill="none" stroke="#fff" stroke-width="1.1" transform="rotate(90 9 9)"/></svg>
<svg style="left:1780px;top:1052px" width="18" height="16" viewBox="0 0 18 16"><path d="M1.5 5.5H4.5L8.5 2V14L4.5 10.5H1.5Z" fill="none" stroke="#fff" stroke-width="1.2"/><path d="M11 5.5Q12.5 8 11 10.5" fill="none" stroke="#fff" stroke-width="1.1"/><path d="M13.3 3.8Q16 8 13.3 12.2" fill="none" stroke="#8a8a8a" stroke-width="1.1"/><path d="M15.5 2.2Q19 8 15.5 13.8" fill="none" stroke="#666" stroke-width="1.1"/></svg>
<span class="t " style="left:1820px;top:1043px;letter-spacing:-0.686px;color:#fff">18:29</span>
<span class="t " style="left:1807px;top:1061px;letter-spacing:-0.606px;color:#fff">31.08.2017</span>
<svg style="left:1879px;top:1051px" width="18" height="18" viewBox="0 0 18 18"><path d="M0.6 0.6H16V13.4H10.8L8.3 15.9L5.8 13.4H0.6Z" fill="none" stroke="#fff" stroke-width="1.1"/></svg>
</body></html>
